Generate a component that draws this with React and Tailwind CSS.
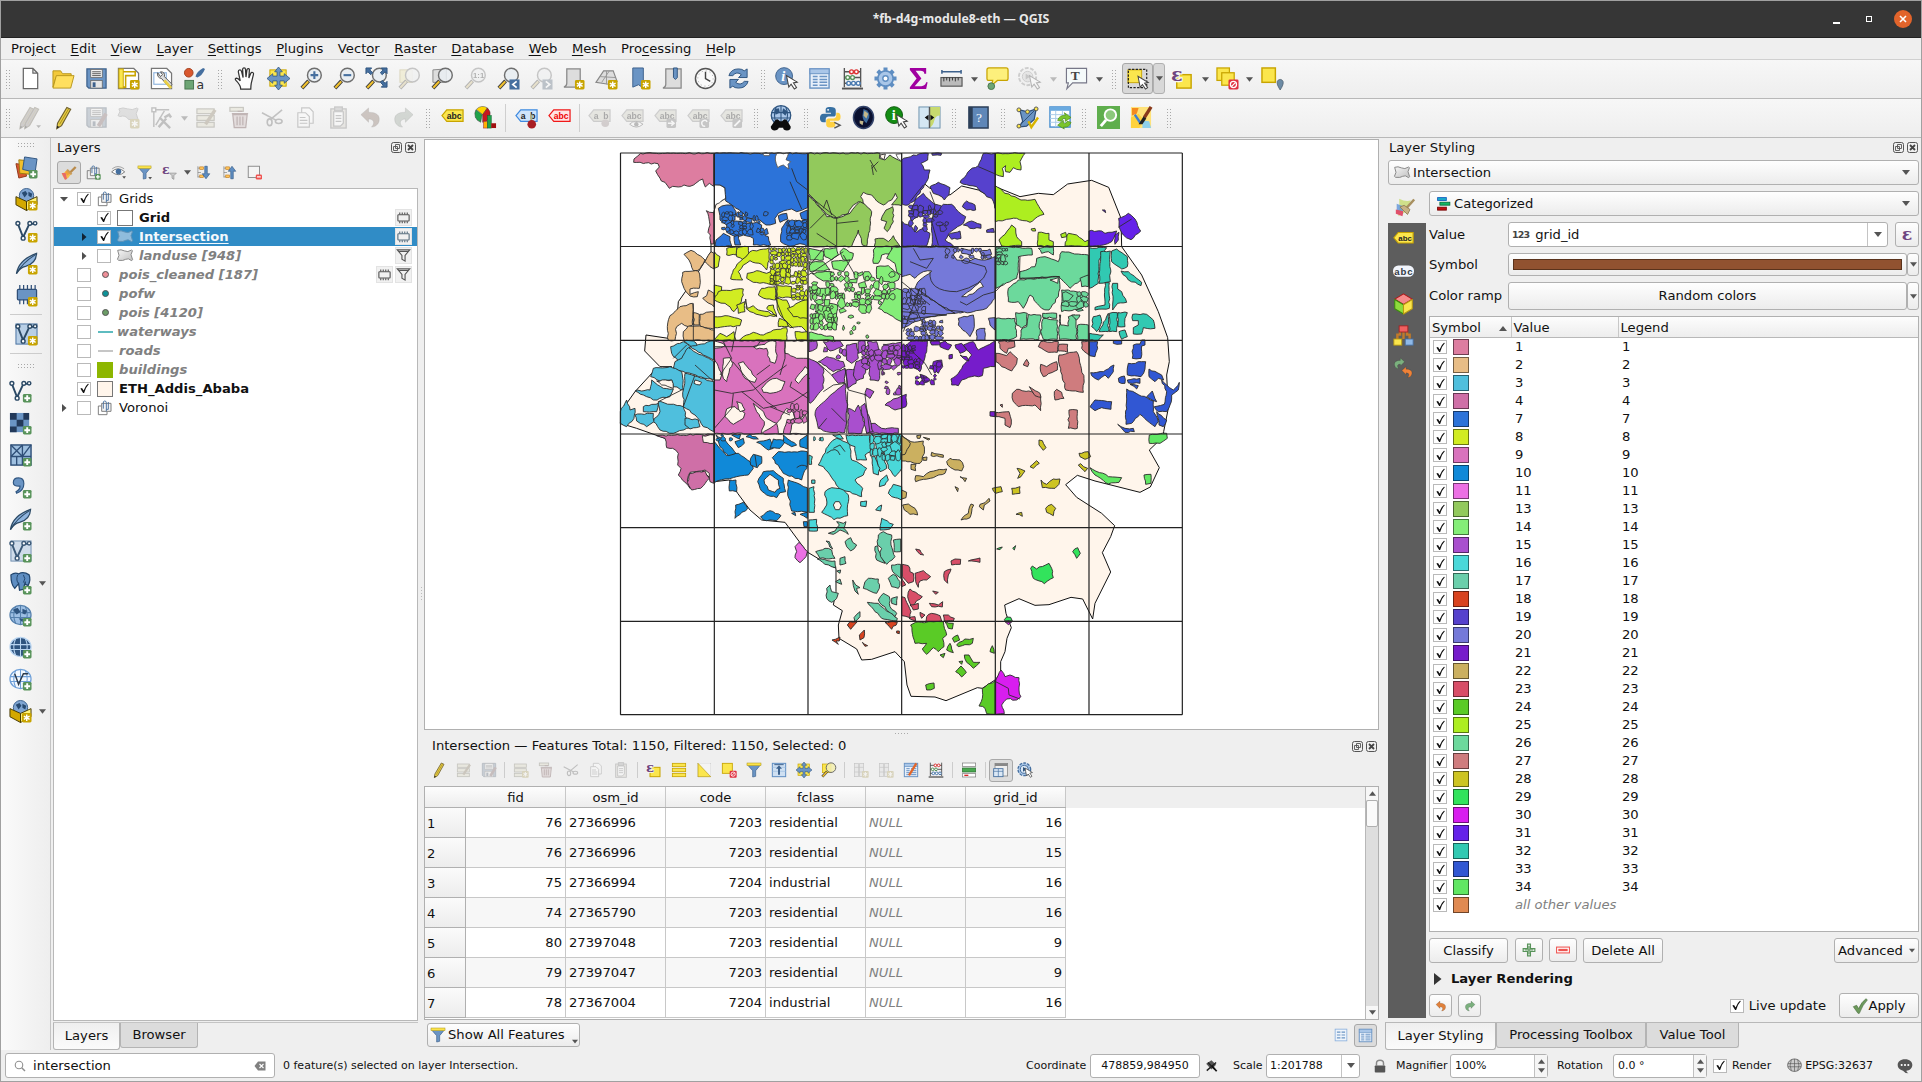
import React from 'react';
import clsx from 'clsx';

/* ---------- icons (24 x 24 grid) ---------- */

const Star = () => (
  <g>
    <rect x="13.5" y="13.5" width="10" height="10" rx="1.5" fill="#c8a400" />
    <path d="M18.5 15v7M15.5 16.8l6 3.4M15.5 20.2l6-3.4" stroke="#fff" strokeWidth="1.5" />
  </g>
);
const Plus = () => (
  <g>
    <rect x="14.5" y="14.5" width="9" height="9" rx="1.5" fill="#58935a" />
    <path d="M19 16v6M16 19h6" stroke="#fff" strokeWidth="2" />
  </g>
);
const Lens = ({ fill = '#e9eef2' }) => (
  <g>
    <path d="M9 14.5L2 22" stroke="#3c3c3c" strokeWidth="4" />
    <path d="M8.6 15L2.4 21.6" stroke="#f2c22e" strokeWidth="2.2" />
    <circle cx="15" cy="8.5" r="7.2" fill={fill} stroke="#6e6e6e" strokeWidth="1.5" />
  </g>
);
const Cursor = () => (
  <path d="M12 9l2.4 12 2.4-3 3.4 5 2.3-1.6-3.3-4.8 4-.8z" fill="#fff" stroke="#444" strokeWidth="1.1" />
);
const Tag = ({ fill, stroke, text = '#222', label = 'abc' }) => (
  <g>
    <path d="M1 10l5-6h17v12H6z" fill={fill} stroke={stroke} strokeWidth="1.3" />
    <text x="6" y="13.5" fontSize="9" fontWeight="bold" fontFamily="Liberation Sans, sans-serif" fill={text} textLength="15.5">{label}</text>
  </g>
);
const Pencil = ({ c = '#e9cf45', x = 0 }) => (
  <g transform={`translate(${x} 0)`}>
    <path d="M15.5 1.5l4 2L10 20.500l-5 3 .8-5.500z" fill={c} stroke="#6f6030" strokeWidth="1.2" />
    <path d="M5.400 20.500L5 23.500l2.600-1.600z" fill="#222" />
    <path d="M17.300 3L8 19" stroke="#a58b1e" strokeWidth="1" />
  </g>
);
const Floppy = () => (
  <g>
    <path d="M2 2h20v20H4l-2-2z" fill="#6a94c4" stroke="#3d618c" strokeWidth="1.3" />
    <rect x="6" y="2.500" width="12" height="8.500" fill="#f4f4f4" stroke="#666" strokeWidth=".8" />
    <path d="M7.500 5h9M7.500 7h9M7.500 9h9" stroke="#555" strokeWidth="1" />
    <rect x="6" y="14" width="12" height="8" fill="#e6e6e6" stroke="#666" strokeWidth=".8" />
    <rect x="8" y="16" width="3" height="5" fill="#3d618c" />
  </g>
);
const Page = () => <path d="M4.500 1.500h10l5 5v16h-15z M14.500 1.500v5h5" fill="#fff" stroke="#666" strokeWidth="1.3" />;
const Funnel = () => (
  <g>
    <path d="M2 4h20l-7.500 9v8.500l-4.500 1V13z" fill="#6a94c4" stroke="#3d618c" strokeWidth="1" />
    <rect x="1.500" y="1.500" width="21" height="4" fill="#fbe34a" stroke="#b09a20" strokeWidth=".8" />
  </g>
);
const VNodes = ({ c = '#2c4a66' }) => (
  <g fill="none" stroke={c} strokeWidth="1.500">
    <path d="M3 4l5.500 14L15 4h5" strokeWidth="2" />
    <g fill="#fff"><circle cx="3" cy="3.500" r="2" /><circle cx="8.500" cy="19" r="2" /><circle cx="15.500" cy="3.500" r="2" /><circle cx="21" cy="3.500" r="1.800" /></g>
  </g>
);
const Globe = ({ fill = '#8fb4de', land = '#274a70' }) => (
  <g>
    <ellipse cx="12" cy="11.500" rx="11" ry="10" fill={fill} stroke={land} strokeWidth="1.300" />
    <path d="M1.500 9h21M1.500 14h21M12 1.500v20M7 2.500q-4 9 0 18M17 2.500q4 9 0 18" stroke={land} strokeWidth="1.100" fill="none" />
  </g>
);
const Feather = () => (
  <g>
    <path d="M1.500 22.500Q4 8 22.500 1.500Q22 12 11 15Q5.500 16 1.500 22.500z" fill="#8fb4de" stroke="#2c4a66" strokeWidth="1.300" />
    <path d="M1.500 22.500Q8 11 21 3" stroke="#2c4a66" fill="none" strokeWidth="1.200" />
  </g>
);
const Box = () => (
  <g>
    <circle cx="12" cy="8" r="7.500" fill="#7fa5d2" stroke="#3d618c" />
    <path d="M7 5l4-2 2 3-3 4zM14 4l4 2-1 4-3-2z" fill="#274a70" />
    <path d="M1 9l11 5v9.500L1 17.500z" fill="#d3a800" stroke="#453800" strokeWidth="1" />
    <path d="M23 9l-11 5v9.500l11-6z" fill="#fff27a" stroke="#453800" strokeWidth="1" />
  </g>
);
const Abacus = () => (
  <g>
    <path d="M3.500 1v20M20.500 1v20M3 5h18M3 11h18M3 17h18" stroke="#555" strokeWidth="1.400" />
    <path d="M1 22.500h22" stroke="#555" strokeWidth="2" />
    <g fill="#fff" strokeWidth="1.500"><g stroke="#d33"><circle cx="11" cy="5" r="2" /><circle cx="16" cy="5" r="2" /></g><g stroke="#58935a"><circle cx="7" cy="11" r="2" /><circle cx="12" cy="11" r="2" /></g><g stroke="#4a7ab0"><circle cx="8" cy="17" r="2" /><circle cx="13" cy="17" r="2" /><circle cx="18" cy="17" r="2" /></g></g>
  </g>
);
const Gear = ({ c = '#5f8ec2' }) => (
  <g>
    <path d="M12 .5v23M.5 12h23M3.900 3.900l16.200 16.200M20.100 3.900L3.900 20.100" stroke={c} strokeWidth="4.200" />
    <circle cx="12" cy="12" r="8" fill="#a9c6e8" stroke={c} strokeWidth="1.800" />
    <circle cx="12" cy="12" r="2.800" fill="#fff" stroke={c} strokeWidth="1.500" />
  </g>
);
const Rows = () => (
  <g fill="#e3dba0" stroke="#7c7650" strokeWidth="1.200"><rect x="2" y="3" width="18" height="5" /><rect x="2" y="10" width="18" height="5" /><rect x="2" y="17" width="18" height="5" /></g>
);
const Trash = () => (
  <g stroke="#8a3b3b" strokeWidth="1.300" fill="#e0b0b0"><rect x="2" y="1.500" width="14" height="4" fill="#e3dba0" stroke="#7c7650" /><path d="M5 9h15l-1.500 13.500h-12z" /><path d="M4 8h17M10 5.500h5M9.500 11v9M12.500 11v9M15.500 11v9" /></g>
);
const Scissors = () => (
  <g stroke="#666" strokeWidth="1.700" fill="none"><path d="M1 7l15 8M22 4L10 14" /><ellipse cx="18.500" cy="16" rx="3.500" ry="2.200" /><ellipse cx="9" cy="17" rx="2.500" ry="3.500" /></g>
);
const Copy = () => (
  <g fill="#fff" stroke="#777" strokeWidth="1.200"><path d="M8 2h8l4 4v12H8z" /><path d="M4 7h8l4 4v11H4z" /><path d="M6 12h6M6 15h8M6 18h8" /></g>
);
const Clip = () => (
  <g stroke="#777" strokeWidth="1.300"><rect x="4" y="3" width="16" height="20" fill="#d9d0b8" /><path d="M7 6h10v12l-3 3H7z" fill="#fff" /><rect x="8" y="1" width="8" height="4" fill="#aaa" /><path d="M9 10h6M9 13h6M9 16h6" /></g>
);
const Undo = ({ c = '#e0813c' }) => <path d="M2 9l8-7v4.500c8 0 12 3 11 9-.5 3.500-4 6.500-8 6.500 3-3 4-8-3-8.500V17z" fill={c} stroke="#00000044" />;
const Epsilon = ({ x = 0, y = 14, s = 18 }) => <text x={x} y={y} fontSize={s} fontWeight="bold" fontFamily="DejaVu Serif, Liberation Serif, serif" fill="#6f4580">ε</text>;
const Group = () => (
  <g fill="none" stroke="#777" strokeWidth="1.400"><path d="M6 9H2v13h13v-4" /><path d="M7 5h14v12H7z" fill="#f3f3f3" /><path d="M14 17V4q0-2.500-2.500-2.500T9.500 5v8M14 14h3V3" stroke="#456f9f" /></g>
);
const Arrows4 = () => (
  <g><rect x="3" y="3" width="17" height="17" fill="#fbe64d" stroke="#c8a400" /><path d="M12 0l4 5h-2.500v4.500H18V7l6 5-6 5v-2.500h-4.500V19H16l-4 5-4-5h2.500v-4.500H6V17l-6-5 6-5v2.500h4.500V5H8z" fill="#6a94c4" stroke="#2f5580" strokeWidth=".8" /></g>
);
const NoEntry = () => (
  <g><rect x="13" y="13" width="10.500" height="10.500" rx="1.500" fill="#e03040" stroke="none" /><circle cx="18.200" cy="18.200" r="3.200" fill="none" stroke="#fff" strokeWidth="1.300" /><path d="M16 20.500l4.500-4.500" stroke="#fff" strokeWidth="1.300" /></g>
);
const Table = ({ head = '#6a94c4' }) => (
  <g><rect x="2" y="2" width="20" height="20" fill="#e8f0fa" stroke={head} strokeWidth="1.500" /><rect x="2" y="2" width="20" height="5" fill="#a9c6e8" stroke={head} /><path d="M5 10h5M12 10h8M5 13h5M12 13h8M5 16h5M12 16h8M5 19h5M12 19h8" stroke={head} strokeWidth="1.500" /></g>
);
const Poly = ({ fill = 'url(#polyGrad)', stroke = '#8a8a8a' }) => <path d="M1 3.500q5-2 10 .8t11-1.300l1.200 1-2.200 6 2.400 7.500-1.400 1.500q-5.500-4.500-9-2t-10.500 1.500l-1.800-1.500 2.300-6z" fill={fill} stroke={stroke} strokeWidth="1.500" />;
const Chip = ({ c = '#555' }) => (
  <g stroke={c} strokeWidth="1.800" fill="none"><rect x="3" y="7.500" width="18" height="10" rx="1" /><path d="M6 4v3M10 4v3M14 4v3M18 4v3M6 18v3M10 18v3M14 18v3M18 18v3" /></g>
);

const ICONS = {
  page: <Page />,
  folder: <g><path d="M1 4h8l2 3h9v4H4L1 21z" fill="#f3c93a" stroke="#b8961c" /><path d="M4.500 9H23l-3.500 13H1z" fill="#ffdf5e" stroke="#b8961c" /></g>,
  save: <Floppy />,
  layoutNew: <g><path d="M1.500 1.500h16l5 5v16h-21z" fill="#fff" stroke="#777" strokeWidth="1.300" /><path d="M5 21V5h14v4H9v12z" fill="#fff" stroke="#c8a400" strokeWidth="1.600" /><rect x="2" y="2" width="4.500" height="20" fill="#fbe64d" stroke="#c8a400" /><Star /></g>,
  layoutMgr: <g><path d="M1.500 1.500h16l5 5v16h-21z" fill="#fff" stroke="#777" strokeWidth="1.300" /><rect x="4" y="6" width="13" height="12" fill="#fff" stroke="#8fb4de" strokeWidth="1.200" /><path d="M8 6q-1 5 4 6l8 9 3-3-8-8q1-5-4-5l2 3-2 2z" fill="#ddd" stroke="#555" /><path d="M15 14l7 8" stroke="#e9cf45" strokeWidth="3" /></g>,
  style: <g><circle cx="6" cy="6" r="4.500" fill="#d9572e" stroke="#a33f1c" /><path d="M13 10q1-5 8-9l2 1q-3 7-8 9z" fill="#456f9f" /><rect x="2" y="14" width="9" height="9" fill="#6da574" stroke="#48754e" /><text x="14" y="22.500" fontSize="13" fontFamily="DejaVu Sans, sans-serif" fill="#333">a</text></g>,
  hand: <path d="M7 23q0-4-5-9-1.500-2 .5-2.500 2 0 4 3L4.500 5q0-2 1.500-2t2 2l1.500 6L9 2.500Q9 1 10.500 1T12 2.500l.5 8 1-7.500q.3-1.500 1.600-1.300T16 3.500l-.5 8 2-5q.7-1.300 2-.8t.8 2L18 17q-.5 3-.5 6z" fill="#fff" stroke="#333" strokeWidth="1.300" />,
  pan: <Arrows4 />,
  zoomIn: <g><Lens /><path d="M15 4.500v8M11 8.500h8" stroke="#456f9f" strokeWidth="2.200" /></g>,
  zoomOut: <g><Lens /><path d="M11 8.500h8" stroke="#456f9f" strokeWidth="2.200" /></g>,
  zoomFull: <g><Lens /><path d="M1 1h6L5 3l3 3-2 2-3-3-2 2zM23 1h-6l2 2-3 3 2 2 3-3 2 2zM23 21h-6l2-2-3-3 2-2 3 3 2-2z" fill="#456f9f" stroke="#2f5580" /></g>,
  zoomSel: <g><rect x="2" y="3" width="13" height="13" fill="#fbe64d" stroke="#c8a400" /><Lens fill="#e9eef2dd" /></g>,
  zoomLayer: <g><path d="M2 3l14-1v14H2z" fill="#ddd" stroke="#888" /><Lens fill="#e9eef2dd" /></g>,
  zoomOne: <g><Lens /><text x="9.500" y="12" fontSize="8" fontWeight="bold" fontFamily="Liberation Sans" fill="#333">1:1</text></g>,
  zoomLast: <g><Lens /><rect x="13" y="13" width="10.500" height="10.500" fill="#456f9f" /><path d="M20.500 15l-4 3.200 4 3.300" stroke="#fff" strokeWidth="1.800" fill="none" /></g>,
  zoomNext: <g><Lens /><rect x="13" y="13" width="10.500" height="10.500" fill="#456f9f" /><path d="M16.500 15l4 3.200-4 3.300" stroke="#fff" strokeWidth="1.800" fill="none" /></g>,
  mapNew: <g><path d="M5 2h14v19H2q3-1 3-4z" fill="#ddd" stroke="#888" strokeWidth="1.300" /><Star /></g>,
  map3d: <g><path d="M1 16L9 4h10l4 11-9 3z" fill="#ddd" stroke="#888" strokeWidth="1.200" /><path d="M5 10l16 1M12 4v14M7 16l8-12" stroke="#999" /><Star /></g>,
  bookNew: <g><path d="M5 1h11v21l-5-3.500L5 21z" fill="#6a94c4" stroke="#3d618c" /><Star /></g>,
  bookmark: <g><path d="M5 2h16v20H2q3-1 3-4z" fill="#ddd" stroke="#888" strokeWidth="1.300" /><path d="M13 1h4v10l-2 2-2-2z" fill="#6a94c4" stroke="#2f5580" /></g>,
  clock: <g><circle cx="12" cy="12" r="10.500" fill="#fafafa" stroke="#555" strokeWidth="1.500" /><path d="M12 5v7l5 3" stroke="#444" strokeWidth="1.500" fill="none" /><circle cx="12" cy="12" r="8" fill="none" stroke="#999" strokeDasharray="1 3.190" /></g>,
  refresh: <g><path d="M2 9q2-7 10-7 4 0 6 2l3-2v9h-9l3-3q-5-4-9 1z" fill="#6a94c4" stroke="#2f5580" /><path d="M22 15q-2 7-10 7-4 0-6-2l-3 2v-9h9l-3 3q5 4 9-1z" fill="#6a94c4" stroke="#2f5580" /></g>,
  identify: <g><circle cx="9.500" cy="9.500" r="8.800" fill="#6a94c4" stroke="#3d618c" /><text x="6.500" y="15" fontSize="15" fontStyle="italic" fontWeight="bold" fontFamily="Liberation Serif" fill="#fff">i</text><Cursor /></g>,
  table: <Table />, abacus: <Abacus />, gear: <Gear />,
  sigma: <path d="M3 1h17v6h-2q0-3-4-3H9l6 8-7 8h7q4 0 5-4h1.500L20 23H3v-2l7-9-7-9z" fill="#a000a0" />,
  ruler: <g><path d="M2 5h20M2 3v4M22 3v4" stroke="#3d618c" strokeWidth="1.600" /><rect x="1" y="11" width="22" height="9" fill="#bbb" stroke="#555" strokeWidth="1.200" /><path d="M4 11v4M7 11v3M10 11v4M13 11v3M16 11v4M19 11v3" stroke="#333" /></g>,
  maptip: <g><path d="M3 1h18q2 0 2 2v9q0 2-2 2h-9l-6 5 1-5H3q-2 0-2-2V3q0-2 2-2z" fill="#fdf07c" stroke="#c8a400" strokeWidth="1.300" /><circle cx="5.500" cy="20" r="3.500" fill="#6da574" stroke="#48754e" /></g>,
  gearCursor: <g><circle cx="10" cy="10" r="9" fill="#eee" stroke="#888" strokeWidth="2" strokeDasharray="4 1.600" /><circle cx="10" cy="10" r="5.500" fill="#ccc" stroke="#888" /><path d="M8 7l5 3-5 3z" fill="#777" /><Cursor /></g>,
  textAnn: <g><path d="M1.500 1.500h21v15H8l-6 6 1.500-6h-2z" fill="#f5fafa" stroke="#778" strokeWidth="1.200" /><text x="6" y="14" fontSize="14" fontWeight="bold" fontFamily="Liberation Serif" fill="#444">T</text></g>,
  select: <g><rect x="1" y="2" width="15" height="14" fill="#fbe64d" stroke="#c8a400" /><rect x="1.500" y="1.500" width="20" height="20" fill="none" stroke="#222" strokeWidth="1.300" strokeDasharray="2.500 1.500" /><Cursor /></g>,
  selExpr: <g><rect x="6" y="8" width="15" height="14" fill="#fbe64d" stroke="#c8a400" strokeWidth="1.500" /><text x="0" y="15" fontSize="20" fontWeight="bold" fontFamily="DejaVu Serif, Liberation Serif, serif" fill="#6f4580" stroke="#f6f6f6" strokeWidth="2.500" paintOrder="stroke">ε</text></g>,
  deselect: <g fill="#fbe64d" stroke="#c8a400" strokeWidth="1.300"><rect x="1" y="1" width="13" height="13" /><rect x="6" y="6" width="13" height="13" /><NoEntry /></g>,
  deselectOne: <g><rect x="2" y="2" width="15" height="15" fill="#fbe64d" stroke="#c8a400" strokeWidth="1.300" /><NoEntry /></g>,
  selLoc: <g><rect x="1" y="1" width="14" height="15" fill="#fbe64d" stroke="#c8a400" strokeWidth="1.500" /><path d="M20 24q-4-6-3-9a3.200 3.200 0 0 1 6 0q1 3-3 9z" fill="#6d8ba5" stroke="#456" strokeWidth=".7" /></g>,
  pencils: <g><Pencil c="#9b8a8a" x={-4} /><Pencil c="#9b8a8a" x={1} /><path d="M18 20h5l-2.500 3z" fill="#555" /></g>,
  pencil: <Pencil />,
  saveEdit: <g><Floppy /><path d="M22 8l-8 13" stroke="#9c5a5a" strokeWidth="4" /></g>,
  addPoly: <g><path d="M2 3q4-2 9 0t10-1l1 1-2 5 2 6H12q-3-5-9-3l-2-1 2-4z" fill="#b9b9b9" stroke="#888" /><Star /></g>,
  vertex: <g stroke="#666" strokeWidth="1.500"><path d="M4 22V4h16" fill="none" /><path d="M6 20L15 5" /><rect x="2" y="2" width="4" height="4" fill="#fff" /><path d="M9 22l8-9M10 12l11 11M15 12l5-3 2 3" strokeWidth="2.500" fill="none" /></g>,
  rowsEdit: <g><Rows /><path d="M21 4L11 19" stroke="#9c7a3a" strokeWidth="3.500" /></g>,
  trash: <Trash />, cut: <Scissors />, copy: <Copy />, paste: <Clip />,
  undo: <Undo c="#a06a4a" />, redo: <g transform="translate(24 0) scale(-1 1)"><Undo c="#8aa88a" /></g>,
  undoC: <Undo />, redoC: <g transform="translate(24 0) scale(-1 1)"><Undo c="#7bb07e" /></g>,
  tag: <Tag fill="#fbe64d" stroke="#c8a400" />,
  diagram: <g><path d="M9 9L2.500 3.500A8.500 8.500 0 0 1 14 2z" fill="#ffd500" stroke="#444" strokeWidth=".5" /><path d="M8.500 9L2 4a9 9 0 0 0 5 13z" fill="#1fa24a" stroke="#333" strokeWidth=".5" /><path d="M9 9l5-7a8.600 8.600 0 0 1-5 15z" fill="#c8171e" stroke="#333" strokeWidth=".5" /><rect x="10" y="16" width="4" height="7" fill="#ffb000" stroke="#a33" strokeWidth=".6" /><rect x="14" y="10" width="4" height="13" fill="#1fa24a" stroke="#163" strokeWidth=".6" /><rect x="18" y="18" width="5" height="5" fill="#a01010" /></g>,
  tagPin: <g><Tag fill="#cfe4fb" stroke="#3f8ae0" label="ab" /><path d="M17 9v7" stroke="#aa8" strokeWidth="2" /><circle cx="17.500" cy="19" r="4.500" fill="#a81e24" /></g>,
  tagRed: <Tag fill="#ffe3e3" stroke="#f01818" text="#e00" />,
  tagPinG: <g><Tag fill="#cfcda8" stroke="#888" label="ab" /><circle cx="18" cy="18" r="4" fill="#a88" /></g>,
  tagEye: <g><Tag fill="#cfcda8" stroke="#888" /><path d="M9 19q6-6 14 0-7 6-14 0z" fill="#fff" stroke="#555" /><circle cx="16" cy="19" r="2.300" fill="#555" /></g>,
  tagMove: <g><Tag fill="#cfcda8" stroke="#888" /><rect x="13" y="13" width="10" height="10" rx="2" fill="#777" /><path d="M14.500 18h6M18 15.500l3 2.500-3 2.500" stroke="#fff" fill="none" strokeWidth="1.500" /></g>,
  tagRot: <g><Tag fill="#cfcda8" stroke="#888" /><rect x="13" y="13" width="10" height="10" rx="2" fill="#777" /><path d="M21 16.500a3 3 0 1 0-2 4.500" stroke="#fff" fill="none" strokeWidth="1.500" /></g>,
  tagEdit: <g><Tag fill="#cfcda8" stroke="#888" /><rect x="13" y="13" width="10" height="10" rx="2" fill="#777" /><path d="M15 21l6-6" stroke="#fff" strokeWidth="2" /></g>,
  metasearch: <g><circle cx="12" cy="9.500" r="9" fill="#a9c6e8" stroke="#2f5580" strokeWidth="1.200" /><path d="M3 7h18M3 12h18M12 1v18M7.500 2q-3 7 0 15M16.500 2q3 7 0 15" stroke="#2f5580" fill="none" /><path d="M6 4l4-1 1 4-4 2zM14 3l4 3-2 4-3-3z" fill="#2f5580" /><path d="M6 15q2-3 4-1l1 1h2l1-1q2-2 4 1l3 5q0 3.500-3.500 3.500T14 21h-4q-1 2.500-4 2.500T2.500 20z" fill="#0c0c0c" /></g>,
  python: <g><path d="M12 1c-5 0-5 1.500-5 3.500V7h5.500v1H5c-3 0-4 2-4 4.500S2 17 4.500 17H7v-3c0-2 1.500-3 3-3h5c1.500 0 2.500-1 2.500-2.500v-4C17.500 2 15.500 1 12 1z" fill="#3871a3" /><path d="M12 22.500c5 0 5-1.500 5-3.500v-2.500h-5.500v-1H19c3 0 3.500-2 3.500-4.500S21.500 7 19.500 7H18v3c0 2-1.500 3-3 3h-5c-1.500 0-2.500 1-2.500 2.500v4c0 2 2 3 4.500 3z" fill="#ffd040" /><circle cx="9.500" cy="4" r="1" fill="#fff" /><path d="M16 17l6 3-6 3" stroke="#555" fill="none" strokeWidth="1.500" /></g>,
  earth: <g><ellipse cx="12" cy="12" rx="10.500" ry="11.500" fill="#0a1030" stroke="#33436a" strokeWidth="1.500" /><path d="M12 3q7 2 6 9l-3 6q-4-3-4-8z" fill="#3f6ea0" /><path d="M13 5l4 3-2 5-3-3zM8 15l4 1-1 4-3-2z" fill="#c4b78a" /></g>,
  infoGreen: <g><circle cx="9.500" cy="9.500" r="8.800" fill="#138c13" stroke="#0a5a0a" /><text x="7" y="15" fontSize="15" fontWeight="bold" fontFamily="Liberation Serif" fill="#fff">i</text><Cursor /></g>,
  swipe: <g><rect x="1" y="1" width="22" height="22" fill="#d4e7f3" stroke="#6d93ad" /><path d="M12 1h11v9q-5 0-6 5t-5 8z" fill="#c7da6e" /><path d="M12 1v22" stroke="#555" strokeWidth="1.500" /><path d="M11 9v6l-4-3zM13 9v6l4-3z" fill="#111" /></g>,
  help: <g><path d="M2 1h20v22H2z" fill="#5f87b8" stroke="#2c3f58" strokeWidth="1.500" /><path d="M2 1h4v22H2z" fill="#2c3f58" /><text x="9.500" y="17" fontSize="14" fontFamily="Liberation Serif" fill="#fff">?</text></g>,
  checkGeom: <g><path d="M4 4l8 2 9-3-2 11-8 7-8 1 4-6z" fill="#6a94c4" stroke="#2f4f78" strokeWidth="1.300" /><path d="M3 21L21 3" stroke="#2f4f78" /><g fill="#fbe64d" stroke="#555"><circle cx="3" cy="4" r="2" /><circle cx="12" cy="6" r="2" /><circle cx="21" cy="3" r="2" /><circle cx="3" cy="21" r="2" /></g><path d="M13 16l3 6L23 12" stroke="#d8b400" strokeWidth="2.500" fill="none" /></g>,
  tableRef: <g><rect x="1" y="1" width="21" height="21" fill="#fff" stroke="#4a90d0" strokeWidth="1.500" /><rect x="1" y="1" width="21" height="4" fill="#6aaae0" /><path d="M1 9h21M1 13h21M1 17h21M7 5v17M14 5v17" stroke="#a8cbe8" /><path d="M9 15q2-6 8-5l-1-3 7 5-6 4v-3q-3-1-4 3zM23 17q-2 6-8 5l1 2-7-4 6-5v3q3 1 4-2z" fill="#7ac52c" stroke="#4b8a14" strokeWidth=".7" /></g>,
  greenLens: <g><rect width="24" height="24" fill="#5fae4d" /><circle cx="14" cy="9.500" r="6" fill="#8cc97c" stroke="#fff" strokeWidth="2" /><path d="M9.500 14.500L4 21" stroke="#fff" strokeWidth="3" /></g>,
  brushMap: <g><rect x="1" y="1" width="21" height="22" fill="#ffe27a" /><path d="M1 12l8-4 5 6-4 9H1z" fill="#ffd23c" /><path d="M2 2h7l-2 6-5 2z" fill="#f58b1f" /><path d="M13 15l7 1 2 7h-9z" fill="#8fd0ea" /><path d="M5 9l6 9" stroke="#3f7fd0" strokeWidth="2.500" /><path d="M15 12l7-11" stroke="#8a3a1c" strokeWidth="3.500" /><path d="M9 19l5-8 3 2-4 6z" fill="#222" /></g>,
  dsm: <g><path d="M1 8l9 1 2 12-8 2z" fill="#d9572e" stroke="#8e3a1c" /><path d="M4 4l11 1v14l-10-1z" fill="#f3c02a" stroke="#9c7a12" /><path d="M10 1l13 2-2 14-13-3z" fill="#6a94c4" stroke="#2f5580" /><Plus /></g>,
  gpkg: <g><Box /><Star /></g>,
  shpNew: <g><VNodes /><Star /></g>,
  spatNew: <g><Feather /><Star /></g>,
  memNew: <g><path d="M5 1v20M9 1v20M13 1v20M17 1v20M21 1v20" stroke="#2f4f78" strokeWidth="1.300" /><rect x="2.500" y="5.500" width="20" height="11" rx="1" fill="#6a94c4" stroke="#2f4f78" strokeWidth="1.300" /><Star /></g>,
  virtNew: <g><rect x="1" y="1" width="22" height="21" fill="#b8cfe6" stroke="#456f9f" /><VNodes /><Star /></g>,
  vecAdd: <g><VNodes /><Plus /></g>,
  rasAdd: <g><rect x="1" y="1" width="20" height="20" fill="#6a94c4" /><path d="M1 1h7v7H1zM15 1h6v7h-6zM8 8h7v7H8zM1 15h7v6H1z" fill="#22395a" /><Plus /></g>,
  meshAdd: <g><rect x="2" y="1" width="21" height="21" fill="#9fc0e0" stroke="#2f4f78" strokeWidth="1.500" /><path d="M2 13h21M14 1v12M2 1l12 12M14 1L2 13M23 1l-9 12M8 13v9M14 13v9" stroke="#2f4f78" strokeWidth="1.400" /><Plus /></g>,
  csvAdd: <g><path d="M4.500 7q0-5 5.500-5t5.500 6q0 7-7.500 10l-.7-1.500q4.500-2.500 4.200-6-7 .5-7-3.500z" fill="#6a94c4" stroke="#2f5580" strokeWidth="1.200" /><Plus /></g>,
  spatAdd: <g><Feather /><Plus /></g>,
  virtAdd: <g><rect x="2" y="1" width="21" height="21" fill="#cfdcea" stroke="#6f8fb0" /><VNodes c="#3c5a78" /><Plus /></g>,
  pgAdd: <g><path d="M2 3q4-3 8-1 5-3 11 1 2 5-1 11l-3-1v-3l-2 8-4 1-1-7-4 5q-4-4-4-14z" fill="#5f8ec2" stroke="#22466e" strokeWidth="1.300" /><path d="M9 3q-2 6 1 9M15 3q3 4 0 8" stroke="#22466e" fill="none" /><Plus /></g>,
  wmsAdd: <g><Globe fill="#9dbfe4" land="#5580ad" /><path d="M4 6l5-2 3 4-4 3zM14 5l5 2-2 4-3-1zM10 15l5 0-1 4z" fill="#2f5580" /><Plus /></g>,
  xyzAdd: <g><Globe fill="#2f5580" land="#b8d4f0" /><Plus /></g>,
  wfsAdd: <g><Globe fill="#f4f9ff" land="#6fa0d8" /><path d="M6 6l4 11 5-11h5" stroke="#2c3a4a" fill="none" strokeWidth="1.500" /><Plus /></g>,
  brush: <g><path d="M1 12q5 0 8-5l6 7q-3 6-9 8-4-5-5-10z" fill="#f6c04a" /><path d="M1 12l6 0 2 9-3 1z" fill="#e86a6a" /><path d="M6 10l5-3 4 5-6 4z" fill="#f0a03a" /><path d="M13 12l9-9" stroke="#b98a4a" strokeWidth="3.500" /><path d="M9 7l7 7" stroke="#c89a5a" strokeWidth="3" /></g>,
  groupAdd: <g><Group /><Plus /></g>,
  eye: <g><path d="M1 11q10-10 21 0-10 9-21 0z" fill="#fff" stroke="#777" strokeWidth="1.500" /><circle cx="12" cy="10.500" r="4.500" fill="#456f9f" /><path d="M2 6q9-7 19 0" stroke="#777" fill="none" /><path d="M18 18h6l-3 4z" fill="#555" /></g>,
  funnelDd: <g><Funnel /><path d="M18 19h6l-3 4z" fill="#555" /></g>,
  funnel: <Funnel />,
  exprF: <g><Epsilon x={0} y={15} s={20} /><path d="M12 13h11l-4 4v6l-3-2v-4z" fill="#ccc" stroke="#888" /></g>,
  expand: <g><path d="M3 2v18M3 5h5M3 12h5M3 19h5" stroke="#777" fill="none" /><rect x="6" y="3" width="6" height="4" fill="#ffc45a" stroke="#c07a1a" /><rect x="6" y="16" width="6" height="4" fill="#ffc45a" stroke="#c07a1a" /><path d="M14 2h4v12h4l-6 8-6-8h4z" fill="#5f8ec2" stroke="#2f5580" /></g>,
  collapse: <g><path d="M3 2v18M3 5h5M3 12h5M3 19h5" stroke="#777" fill="none" /><rect x="6" y="3" width="6" height="4" fill="#ffc45a" stroke="#c07a1a" /><rect x="6" y="16" width="6" height="4" fill="#ffc45a" stroke="#c07a1a" /><path d="M14 22h4V10h4l-6-8-6 8h4z" fill="#5f8ec2" stroke="#2f5580" /></g>,
  removeL: <g><rect x="2" y="2" width="18" height="18" fill="#f4f4f4" stroke="#888" strokeWidth="1.500" /><rect x="14" y="15" width="10" height="8" rx="2" fill="#ef5350" /><path d="M16 19h6" stroke="#fff" strokeWidth="2" /></g>,
  group: <Group />, poly: <Poly />, polySel: <Poly fill="#8fbcdc" stroke="#5f93b8" />, chip: <Chip />, chipW: <Chip c="#5a7080" />,
  funnelG: <path d="M2 3h20l-7.500 9v9l-5-3v-6z M5 5.500h14" fill="none" stroke="#555" strokeWidth="1.800" />,
  addRow: <g><Rows /><Star /></g>,
  selAll: <g fill="#fbe64d" stroke="#c8a400" strokeWidth="1.200"><rect x="2" y="2" width="20" height="5" /><rect x="2" y="9.500" width="20" height="5" /><rect x="2" y="17" width="20" height="5" /></g>,
  invert: <g><rect x="2" y="2" width="20" height="20" fill="#f4f4f4" stroke="#aaa" /><path d="M2 2v20h20z" fill="#f4f4f4" /><path d="M2 2h20v20z" fill="#f4f4f4" /><path d="M3 2l19 20H3z" fill="#fbe64d" stroke="#b89a10" /></g>,
  moveTop: <g><rect x="2" y="2" width="20" height="20" fill="#cfe0f2" stroke="#5f8ec2" strokeWidth="1.500" /><path d="M2 8h20M2 14h20" stroke="#9dbde0" /><path d="M5 4h14" stroke="#3d618c" strokeWidth="1.500" /><path d="M12 5l4.500 5h-3v9h-3v-9h-3z" fill="#3d618c" /></g>,
  zoomY: <g><rect x="2" y="3" width="13" height="13" fill="#fbe64d" stroke="#c8a400" /><Lens fill="#f3efb0dd" /></g>,
  colNew: <g><g fill="#ddd" stroke="#777"><rect x="2" y="2" width="6" height="20" /><rect x="10" y="2" width="6" height="20" /></g><path d="M2 8h14M2 15h14" stroke="#777" /><Star /></g>,
  colEdit: <g><Table /><path d="M20 2L9 20" stroke="#e2662a" strokeWidth="3.500" /></g>,
  cond: <g stroke="#777"><rect x="2" y="1.500" width="20" height="5" fill="#fff" /><rect x="2" y="9" width="20" height="6" fill="#49a84f" stroke="#2c6e31" /><rect x="2" y="17.500" width="20" height="5" fill="#fff" /><path d="M5 20h6" stroke="#d22" strokeWidth="2" /></g>,
  dock: <g><rect x="3" y="2" width="19" height="19" fill="#eee" stroke="#777" /><rect x="3" y="2" width="19" height="4" fill="#888" /><rect x="1" y="10" width="14" height="12" fill="#dbe8f5" stroke="#456f9f" strokeWidth="1.300" /><path d="M1 14h14M8 10v12" stroke="#456f9f" /></g>,
  gearPlay: <g><circle cx="11" cy="11" r="9.500" fill="#a9c6e8" stroke="#456f9f" strokeWidth="2" strokeDasharray="4.200 1.800" /><circle cx="11" cy="11" r="6" fill="#dbe8f5" stroke="#456f9f" strokeWidth="1.500" /><path d="M9 7.500l6 3.500-6 3.500z" fill="#2f5580" /><Cursor /></g>,
  form: <g><rect x="2" y="2" width="20" height="20" fill="#eef4fb" stroke="#8fb4de" strokeWidth="1.500" /><path d="M5 7h6M5 12h6M5 17h6M13 7h6M13 12h6M13 17h6" stroke="#6a94c4" strokeWidth="2" /></g>,
  categ: <g strokeWidth="1.500"><rect x="1" y="1" width="15" height="5" fill="#1aa7c8" stroke="#1560c0" /><rect x="5" y="9" width="17" height="5" fill="#12b866" stroke="#0b6e3a" /><rect x="1" y="17.500" width="15" height="5" fill="#c01010" stroke="#700" /></g>,
  maskAbc: <g><rect x="0" y="5" width="24" height="13" rx="6" fill="#f1f4fb" /><text x="1.500" y="15.500" fontSize="11" fontWeight="bold" fontFamily="Liberation Sans, sans-serif" fill="#333b45" textLength="21">abc</text></g>,
  cube: <g strokeLinejoin="round" strokeWidth="1.200"><path d="M12 1l10 6-10 6L2 7z" fill="#f58a8a" stroke="#b01818" /><path d="M2 7.500l10 6V24L2 18z" fill="#8edc3c" stroke="#3c8a10" /><path d="M22 7.500l-10 6V24l10-6z" fill="#fbe64d" stroke="#b89a10" /></g>,
  tree: <g><path d="M5 16v-5h3V7M12 8v8M19 16v-5h-3V7" stroke="#c07a2a" strokeWidth="2.800" fill="none" /><rect x="7" y="1" width="10" height="7" fill="#f06060" stroke="#a02020" /><rect x="1" y="16" width="9" height="7" fill="#fbe64d" stroke="#b89a10" /><rect x="14" y="16" width="9" height="7" fill="#8fb9e8" stroke="#456f9f" /></g>,
  history: <g><g transform="scale(.6)"><g transform="translate(24 0) scale(-1 1)"><Undo c="#7bb07e" /></g></g><g transform="translate(9 10) scale(.6)"><Undo c="#ef8238" /></g></g>,
  brushBig: <g><path d="M5 2q8 4 14 2l-6 14-9 5q2-10 1-21z" fill="#cfe08a" /><path d="M2 8l8 3-1 10-7-3z" fill="#5f94d8" opacity=".8" /><path d="M1 15l9 2-1 6-8-3z" fill="#e0506a" /><path d="M14 13l9-10" stroke="#a89060" strokeWidth="3" /><path d="M6 12l9 9 3-6-7-5z" fill="#c8b284" stroke="#8d7a50" /></g>,
  addG: <path d="M9.500 2h5v7.500H22v5h-7.500V22h-5v-7.500H2v-5h7.500z M12 4.500v15M4.500 12h15" fill="#fff" stroke="#58935a" strokeWidth="2" />,
  minR: <g><rect x="1" y="7" width="22" height="10" fill="#fff" stroke="#ef5350" strokeWidth="1.800" /><path d="M4 12h16" stroke="#ef5350" strokeWidth="4" /></g>,
  apply: <path d="M2 13l5-2 3 5Q14 6 21 1l2 2Q16 10 11 23H9z" fill="#6c9a5b" stroke="#4c6e40" />,
  eps: <Epsilon x={4} y={20} s={26} />,
  lock: <g><path d="M6 11V7q0-5 6-5t6 5v4" fill="none" stroke="#888" strokeWidth="2.500" /><rect x="3" y="11" width="18" height="12" rx="1.500" fill="#555" /></g>,
  globeG: <Globe fill="#ccc" land="#5c5c5c" />,
  chat: <g><path d="M12 2c7 0 11 4 11 8.500S19 19 14 19q0 2 3 4-5 0-8-4-8-2-8-8.500C1 6 5 2 12 2z" fill="#555" /><circle cx="7" cy="10.500" r="1.600" fill="#fff" /><circle cx="12" cy="10.500" r="1.600" fill="#fff" /><circle cx="17" cy="10.500" r="1.600" fill="#fff" /></g>,
  extents: <g><path d="M2 8l9-6 8 8-8 8z" fill="#555" /><path d="M5 6l12 12M3 20l16-14" stroke="#222" strokeWidth="2.500" /><path d="M12 12l8 9" stroke="#111" strokeWidth="3" /></g>,
  search: <g fill="none" stroke="#909090" strokeWidth="2.200"><circle cx="10" cy="10" r="7.500" /><path d="M15.500 15.500L22 22" strokeWidth="3" /></g>,
  clear: <g><path d="M1 12l7-9h15v18H8z" fill="#808080" /><path d="M11 8l8 8M19 8l-8 8" stroke="#fff" strokeWidth="2.200" /></g>,
};

const Icon = ({ n, className = 'size-6', dim }) => (
  <svg viewBox="0 0 24 24" className={clsx('shrink-0 overflow-visible', className, dim && 'opacity-35 grayscale-[.6]')}>{ICONS[n]}</svg>
);
const Caret = ({ dim, className }) => (
  <svg viewBox="0 0 8 5" className={clsx('h-[5px] w-2 shrink-0', dim && 'opacity-35', className)}><path d="M0 0h8L4 5z" fill="#555" /></svg>
);
const Handle = ({ w = 'w-4' }) => (
  <div className={clsx('flex shrink-0 items-center justify-center', w)}>
    <div className="h-[21px] w-[6px] bg-[radial-gradient(#a8a8a8_0.9px,transparent_1px)] bg-[length:3px_3px]" />
  </div>
);

/* One horizontal toolbar, described as [kind, name/width, dimmed] entries */
const T = ({ items }) => items.map((it, i) => {
  const [k, a, b] = it;
  if (k === 'h') return <Handle key={i} w={a} />;
  if (k === 's') return <div key={i} className={clsx('flex shrink-0 items-center justify-center', a)}><div className="h-7 w-px bg-[#cfcfcf]" /></div>;
  if (k === 'a') return <div key={i} className={clsx('flex shrink-0 items-center justify-center', a)}><Caret dim={b} className="w-[7px]" /></div>;
  return <div key={i} className="flex w-[32.850px] shrink-0 items-center justify-center pb-px"><Icon n={a} dim={b} className={k === 'b' ? 'size-[26px]' : 'size-[23px]'} /></div>;
});

const ROW1 = [
  ['h', 'w-[13px]'], ['i', 'page'], ['i', 'folder'], ['i', 'save'], ['i', 'layoutNew'], ['i', 'layoutMgr'], ['i', 'style'],
  ['h', 'w-[18px]'], ['i', 'hand'], ['i', 'pan'], ['i', 'zoomIn'], ['i', 'zoomOut'], ['i', 'zoomFull'], ['i', 'zoomSel', 1], ['i', 'zoomLayer'],
  ['i', 'zoomOne', 1], ['i', 'zoomLast'], ['i', 'zoomNext', 1], ['i', 'mapNew'], ['i', 'map3d'], ['i', 'bookNew'], ['i', 'bookmark'], ['i', 'clock'], ['i', 'refresh'],
  ['h', 'w-[16px]'], ['i', 'identify'], ['i', 'table'], ['i', 'abacus'], ['i', 'gear'], ['i', 'sigma'], ['i', 'ruler'], ['a', 'w-[13px]'],
  ['i', 'maptip'], ['i', 'gearCursor', 1], ['a', 'w-[14px]', 1], ['i', 'textAnn'], ['a', 'w-3'], ['h', 'w-[17px]'],
];
const ROW1B = [['i', 'selExpr'], ['a', 'w-3'], ['i', 'deselect'], ['a', 'w-3'], ['i', 'selLoc']];
const ROW2 = [
  ['h', 'w-[13px]'], ['i', 'pencils', 1], ['i', 'pencil'], ['i', 'saveEdit', 1], ['i', 'addPoly', 1], ['i', 'vertex', 1], ['a', 'w-3', 1],
  ['i', 'rowsEdit', 1], ['i', 'trash', 1], ['i', 'cut', 1], ['i', 'copy', 1], ['i', 'paste', 1], ['i', 'undo', 1], ['i', 'redo', 1],
  ['h', 'w-[16px]'], ['i', 'tag'], ['i', 'diagram'], ['s', 'w-2'], ['i', 'tagPin'], ['i', 'tagRed'], ['s', 'w-2'],
  ['i', 'tagPinG', 1], ['i', 'tagEye', 1], ['i', 'tagMove', 1], ['i', 'tagRot', 1], ['i', 'tagEdit', 1],
  ['h', 'w-[17px]'], ['b', 'metasearch'], ['h', 'w-[17px]'], ['i', 'python'], ['i', 'earth'], ['i', 'infoGreen'], ['i', 'swipe'],
  ['h', 'w-[16px]'], ['i', 'help'], ['h', 'w-[16px]'], ['i', 'checkGeom'], ['i', 'tableRef'], ['h', 'w-[16px]'], ['i', 'greenLens'], ['i', 'brushMap'], ['h', 'w-[22px]'],
];

const MENU = [['Pro', 'j', 'ect'], ['', 'E', 'dit'], ['', 'V', 'iew'], ['', 'L', 'ayer'], ['', 'S', 'ettings'], ['', 'P', 'lugins'], ['Vect', 'o', 'r'], ['', 'R', 'aster'], ['', 'D', 'atabase'], ['', 'W', 'eb'], ['', 'M', 'esh'], ['Pro', 'c', 'essing'], ['', 'H', 'elp']];

const Check = ({ on = true }) => (
  <span className="flex size-[14px] shrink-0 items-center justify-center border border-[#b9b9b9] bg-white">
    {on && <svg viewBox="0 0 12 12" className="size-[11px]"><path d="M1.500 6l1.800-.5 1.700 2.800Q6.800 3 9.800.8l1 .4Q7.500 4.500 5.600 11H4.500z" fill="#111" /></svg>}
  </span>
);
const PanelButtons = () => (
  <span className="flex gap-[3px]">
    <svg viewBox="0 0 11 11" className="size-[11px]"><rect x=".5" y=".5" width="10" height="10" rx="2" fill="none" stroke="#555" /><path d="M4.500 2.500h4v4h-4z M2.500 4.500h4v4h-4z" fill="#efefef" stroke="#555" strokeWidth=".9" /></svg>
    <svg viewBox="0 0 11 11" className="size-[11px]"><rect x=".5" y=".5" width="10" height="10" rx="2" fill="none" stroke="#555" /><path d="M3 3l5 5M8 3L3 8" stroke="#444" strokeWidth="1.800" /></svg>
  </span>
);
const BTN = 'flex items-center justify-center rounded-[3px] border border-[#b0b0b0] bg-linear-to-b from-[#fefefe] to-[#ececec] whitespace-nowrap';

/* ---------- map ---------- */

function rng(seed) {
  let s = seed;
  return () => { s = (s * 16807) % 2147483647; return s / 2147483647; };
}
/* Adds small irregularities along every edge that is not on a grid line */
const LINES = [31, 313, 594, 875, 1156, 1437, 1717];
const near = (v) => LINES.some((l) => Math.abs(v - l) < 6);
function rough(str, amp, ox) {
  const p = str.split(' ').map((q) => q.split(',').map(Number));
  const r = rng(Math.round(p[0][0] * 31 + p[0][1] * 17 + 7));
  const out = [];
  p.forEach(([x, y], i) => {
    const [u, v] = p[(i + 1) % p.length];
    out.push(`${x},${y}`);
    const d = Math.hypot(u - x, v - y);
    if (near(x + ox) && near(u + ox) && Math.abs(x - u) < 6) return;
    const n = Math.floor(d / 9);
    for (let k = 1; k < n; k++) out.push(`${(x + ((u - x) * k) / n + (r() - 0.5) * amp).toFixed(1)},${(y + ((v - y) * k) / n + (r() - 0.5) * amp).toFixed(1)}`);
  });
  return out.join(' ');
}
/* Patchwork of small irregular parcels inside a rectangle */
function parcels(x0, y0, w, h, size, fill, seed) {
  const r = rng(seed * 977);
  const out = [];
  const split = (x, y, a, b, depth) => {
    if (depth > 0 && Math.max(a, b) > size * (0.9 + r())) {
      const t = 0.3 + r() * 0.4;
      if (a > b) { split(x, y, a * t, b, depth - 1); split(x + a * t, y, a * (1 - t), b, depth - 1); }
      else { split(x, y, a, b * t, depth - 1); split(x, y + b * t, a, b * (1 - t), depth - 1); }
      return;
    }
    if (r() > fill) return;
    const n = 4 + Math.floor(r() * 4), ph = r() * 6.280;
    const pts = [];
    for (let k = 0; k < n; k++) {
      const an = ph + ((k + r() * 0.5) * 6.280) / n, m = 0.46 + r() * 0.26;
      const px = Math.min(x0 + w, Math.max(x0, x + a / 2 + Math.cos(an) * a * m));
      const py = Math.min(y0 + h, Math.max(y0, y + b / 2 + Math.sin(an) * b * m));
      pts.push(`${px.toFixed(1)},${py.toFixed(1)}`);
    }
    out.push(pts.join(' '));
  };
  split(x0, y0, w, h, 9);
  return out;
}

const C = '#fff5eb';
const COL = { 1: '#dd7da0', 2: '#e8bd86', 3: '#4fbfdd', 4: '#cf6fa7', 7: '#2c73d9', 8: '#d1ec22', 9: '#d972bd', 10: '#1089d8', 11: '#ec70e4', 13: '#92c95c', 14: '#84ee78', 15: '#a94fce', 16: '#4ad8d9', 17: '#6acfab', 18: '#d8431f', 19: '#5641cd', 20: '#7579d9', 21: '#761ccb', 22: '#cbb060', 23: '#d84e68', 24: '#5acb26', 25: '#adee20', 26: '#6cd99c', 27: '#cf7c7e', 28: '#cdc422', 29: '#32e35c', 30: '#d81eef', 31: '#6522e9', 32: '#31c9b2', 33: '#3157d3', 34: '#61e763', c: C, w: '#ffffff' };

const BOUNDARY = '347,130 347,160 318,178 303,230 303,320 240,420 205,470 203,495 175,580 108,570 104,618 150,665 185,665 130,680 75,740 36,795 31,835 80,850 165,880 313,1010 358,1005 383,1045 420,1095 455,1125 525,1132 590,1220 640,1250 678,1270 678,1340 670,1380 697,1397 685,1440 687,1480 740,1512 755,1545 785,1543 855,1520 883,1550 891,1620 903,1654 975,1656 1008,1667 1102,1628 1117,1630 1155,1605 1172,1585 1172,1550 1185,1520 1191,1480 1204,1448 1193,1420 1188,1405 1184,1380 1227,1361 1275,1381 1317,1379 1383,1357 1418,1362 1448,1422 1455,1375 1502,1281 1477,1223 1502,1175 1514,1142 1475,1105 1400,1057 1367,1019 1402,991 1455,1008 1590,1042 1621,1026 1648,968 1618,915 1660,875 1661,860 1675,790 1670,690 1678,650 1673,578 1645,500 1595,390 1535,305 1533,220 1496,127 1445,106 1373,117 1330,149 1285,145 1230,155 1156,125 1140,155 1105,135 1055,123 1020,150 960,130 875,60 700,60 500,100';

const TILE_A = [
  [1, '92,25 311,25 311,124 298,115 286,126 278,102 240,124 222,120 205,126 188,124 178,130 165,112 154,108 137,78 148,66 144,56 71,52 72,42'],
  [1, '289,197 311,203 311,297 303,297 301,270 294,262 300,240 296,215'],
  ['w', '313,118 330,120 345,130 347,160 318,178 313,190'],
  [7, '313,25 593,25 593,188 575,196 560,200 545,192 520,198 505,205 495,220 497,235 480,240 468,240 450,225 415,220 378,190 347,168 345,128 330,120 313,120'],
  ['w', '500,25 496,45 503,68 520,60 537,72 534,58 542,50 528,44 536,25'], ['w', '458,25 462,32 478,32 480,25'],
  [7, '325,190 350,180 365,180 378,200 375,225 350,240 330,225'], [7, '350,238 376,228 410,235 440,232 455,240 450,262 475,275 482,300 430,300 430,280 400,270 380,275 350,262'],
  [7, '315,303 318,285 340,265 360,275 365,303'], [7, '515,250 530,228 575,228 592,220 592,304 570,296 540,304 512,290'], [7, '372,275 385,270 392,300 375,300'], [7, '505,212 530,205 533,222 510,232'], [7, '570,205 592,195 592,225 575,222'],
  [13, '595,25 810,25 808,40 825,45 840,30 855,40 865,45 875,50 875,182 845,180 862,158 856,145 845,165 820,180 800,168 785,150 760,142 752,155 760,175 745,170 730,180 715,205 680,218 650,208 625,180 610,160 595,145'],
  [13, '595,150 615,170 645,205 650,215 680,220 720,205 735,185 750,170 765,178 785,200 780,245 770,304 757,300 745,255 735,280 725,304 595,304'],
  [13, '813,225 828,195 848,185 850,230 832,260 822,250 830,230'], [13, '795,282 820,280 835,290 850,272 870,304 793,304'], ['c', '810,30 826,27 822,44 812,38'], ['w', '858,28 875,26 875,48 865,42'],
  [2, '222,328 243,316 262,328 285,345 270,372 250,377 237,345'], [2, '290,340 303,320 312,325 312,372 300,365 285,350'], [2, '218,382 265,378 270,400 268,430 240,432 240,448 265,440 262,455 240,453 228,440 215,410'], [2, '278,460 290,452 295,435 312,445 312,485'],
  [2, '175,586 172,545 180,512 210,485 248,475 248,540 235,545 215,535 200,545 195,586'], [2, '250,503 268,508 268,540 252,540'], [2, '270,508 312,500 312,552 270,543'], [2, '222,586 220,560 235,543 268,543 312,555 312,586'],
  [8, '313,320 330,335 325,365 313,370'], [8, '350,310 380,305 378,330 350,330'], [8, '382,308 415,305 417,325 400,345 380,335'], [8, '420,320 478,308 478,345 470,375 455,358 420,347 400,360 385,380 398,405 362,402 370,375 390,350'],
  [8, '412,385 440,377 470,385 490,380 497,420 470,415 430,412 410,400'], [8, '455,430 495,425 497,465 470,462 445,450'], [8, '313,420 335,425 330,450 313,455'], [8, '325,440 350,436 400,432 400,450 388,480 372,500 345,475 322,470 313,465'], [8, '313,515 345,512 395,525 390,542 313,548'],
  [8, '500,460 530,465 540,490 592,460 592,565 575,545 540,548 525,525 505,500'], [8, '532,490 592,460 592,520 550,515'], [8, '500,422 545,425 545,458 500,458'], [8, '380,480 405,470 405,500 385,505'], [8, '407,462 412,490 430,482 445,495 475,500 500,515 490,480 475,482 470,490 500,512 460,513 420,500 408,490'], [8, '313,586 330,565 350,575 372,560 378,586'], [8, '388,586 400,575 430,562 460,570 490,555 530,548 530,586'], [8, '560,586 555,560 592,560 592,586'], [8, '508,520 530,530 535,545 505,545'],
  [14, '597,310 640,318 640,345 600,345'], [14, '642,312 680,308 685,330 665,345 645,335'], [14, '690,320 700,310 730,325 725,345 700,345'], [14, '597,350 640,350 660,375 600,380'], [14, '665,350 720,345 700,380 670,372'], [14, '605,385 665,380 665,410 640,408'],
  [14, '790,315 798,305 845,305 845,325 815,330 805,355 790,355'], [14, '850,305 875,305 875,390 860,380 855,355 830,340'], [14, '800,365 835,362 870,392 865,405 845,415 800,400'], [14, '820,470 835,440 860,430 875,435 875,530 840,510 805,490'], [14, '615,500 660,475 682,480 680,540 660,535 640,515'], [14, '597,425 640,430 665,430 660,450 640,455 597,440'], [14, '597,562 670,575 672,586 597,586'], [14, '640,500 660,490 682,540 650,530'],
  [3, '182,605 220,590 240,605 228,625 205,650 185,625'], [3, '222,588 250,588 270,610 250,610'], [3, '215,640 235,608 311,650 311,705 265,695 190,670 195,650'], [3, '240,605 311,588 311,645 280,630'], [3, '130,670 180,665 215,680 220,735 190,725 185,705 150,708 122,695'], [3, '75,738 120,735 125,705 160,730 190,732 180,755 130,765 100,750'],
  [3, '225,685 311,710 311,860 280,845 255,810 220,785 220,735'], [3, '145,770 220,785 230,820 255,845 230,850 190,865 150,855 130,830 150,800'], [3, '31,800 50,765 60,795 75,790 72,820 50,845 31,835'], [3, '75,810 130,805 132,830 110,845 80,828'], [3, '225,820 265,825 270,845 240,852 225,840'], [3, '100,785 145,775 140,800 100,800'], ['c', '255,705 275,712 270,720 252,715'], ['c', '140,708 185,705 190,730 155,720'],
  [9, '313,588 594,588 594,866 313,866'],
  ['c', '340,640 360,638 368,655 355,690 350,710 340,700 338,665'], ['c', '385,655 400,650 440,700 435,712 405,700'], ['c', '430,605 465,598 480,588 498,590 500,640 495,655 480,650 470,610 440,612'], ['c', '525,588 594,588 594,640 560,640 525,625'], ['c', '455,730 480,705 500,700 525,710 515,735 480,745 460,742'], ['c', '555,705 585,665 594,672 594,685 565,715'], ['c', '350,792 375,785 390,795 405,805 400,820 370,838 345,815'], ['c', '430,775 455,795 470,820 500,835 480,850 455,866 463,830 440,800'], ['c', '560,825 594,800 594,866 540,866 545,840'], ['c', '313,640 335,690 330,705 313,705'], ['c', '380,770 395,775 405,795 390,800'], ['c', '500,835 530,790 550,800 555,820 530,830 520,866 505,866'], ['c', '313,588 345,600 340,605 313,610'],
  [15, '595,640 625,655 640,670 640,730 600,775 597,770'], [15, '625,650 650,635 700,650 705,665 670,680'], [15, '665,690 705,670 705,712 685,715'], [15, '708,675 735,672 738,715 712,730'], [15, '620,790 680,735 706,715 712,790 705,862 660,862 625,850 615,810'], [15, '738,650 765,640 772,655 760,700 740,707 730,690'], [15, '772,590 800,590 818,640 805,708 780,705'], [15, '710,600 740,595 745,640 725,655 710,645'], [15, '715,790 735,800 745,780 765,835 755,865 715,865'], [15, '820,598 875,592 875,650 850,645 835,625'], [15, '825,780 850,762 875,753 875,790 855,795'], [15, '770,840 795,835 815,850 865,850 865,865 770,865'], [15, '640,590 690,588 700,602 660,618'], [15, '597,590 620,588 620,610 597,620'], [15, '752,785 765,775 790,860 770,865'], [15, '745,590 765,588 765,620 745,625'], [15, '770,730 792,740 780,760 765,750'], [21, '875,753 889,748 888,785 875,790'],
];
const TILE_B = [
  [19, '20,45 55,30 100,25 98,45 78,55 88,75 105,75 100,100 88,120 75,145 55,170 40,180 22,178'], [19, '110,25 140,25 138,31 112,31'], [19, '265,25 300,25 300,190 290,160 275,155 245,125 225,122 195,112 225,75 250,62'], [19, '105,125 130,112 150,120 165,128 162,150 148,165 130,150 115,145'],
  [19, '45,215 60,165 85,145 110,170 130,180 145,190 120,205 100,195 75,210 50,230'], [19, '22,230 50,245 65,262 85,250 105,265 95,303 22,303'], [19, '110,225 145,178 170,178 190,200 212,215 205,235 165,262 150,285 175,303 110,303'], [19, '202,185 215,168 240,180 242,195 215,195'], [19, '205,240 230,228 258,238 258,250 225,250'], [19, '275,255 295,250 298,262 275,262'], [19, '160,270 195,258 198,280 170,283'],
  [25, '301,25 390,25 375,50 378,75 355,68 345,82 332,80 332,62 322,70 325,95 301,88'], [25, '301,122 330,145 360,155 378,165 420,163 432,185 447,208 428,215 405,232 365,220 345,222 301,230'], [25, '312,285 330,268 350,240 362,250 365,275 380,290 380,303 320,303'], [25, '408,252 420,250 422,258 412,258'], [25, '430,262 462,265 462,285 475,290 475,303 428,303'], [25, '497,268 512,262 515,275 500,278'], [25, '510,303 520,265 545,270 570,290 580,285 580,303'],
  [31, '582,258 620,258 630,265 665,258 650,290 625,300 582,303'], [31, '671,220 700,205 720,222 737,258 708,284 685,270 672,245'], [31, '660,270 672,262 670,285 660,298'], [31, '622,195 630,195 632,203'],
  [20, '20,306 190,306 175,330 185,345 215,350 240,340 270,345 300,335 300,460 275,490 235,500 180,505 130,480 60,430 75,405 110,378 85,380 60,400 45,388 20,395'], ['c', '200,455 255,410 265,425 215,455'], [20, '22,440 50,430 180,505 110,515 60,530 22,550'], [20, '190,520 235,510 238,545 225,575 190,540'], [20, '245,555 270,550 270,586 245,586'], [20, '280,520 300,518 300,555 285,540'], [20, '200,310 235,315 225,330 200,325'], [20, '255,320 285,312 290,328 262,335'],
  [26, '303,306 345,306 410,310 412,330 370,335 370,380 365,400 325,420 303,430'], [26, '375,380 420,365 425,340 450,335 490,350 500,320 580,330 580,390 525,430 490,395 375,402'], [26, '340,430 370,405 492,395 495,430 490,455 462,495 440,490 405,450 385,490 370,470 340,470'], ['c', '465,405 490,398 488,415'], [26, '500,435 545,440 575,460 560,490 500,500'], [26, '303,520 360,520 365,575 340,585 303,585'], [26, '362,503 397,505 395,540 380,550 365,540'], [26, '400,508 437,510 432,583 375,583 378,555 395,545'], [26, '445,520 487,525 487,583 445,583 437,560'], [26, '443,505 485,505 485,520 443,517'], [26, '493,510 497,510 497,540 520,543 520,515 540,510 545,583 493,583'], [26, '548,540 580,540 580,585 548,585'], [26, '430,310 475,306 475,330 460,320 440,325'], [26, '530,510 555,510 545,525'], [26, '555,400 580,390 580,425 560,425'],
  [32, '583,308 635,308 612,345 610,415 583,430'], [32, '617,320 646,318 646,410 612,415'], [32, '650,318 665,312 697,335 697,365 680,372 650,350'], [32, '678,378 700,380 740,412 738,422 700,405'], [32, '630,413 643,413 643,490 600,495 600,487 630,480'], [32, '653,415 668,415 668,432 680,440 695,472 668,475 653,495'], [32, '713,508 755,508 775,525 780,550 745,548 740,567 715,567 715,548 730,540 730,527 713,527'], [32, '595,515 615,510 620,530 605,560 590,545'], [32, '612,560 640,505 640,560'], [32, '643,505 667,503 665,560 643,560'], [32, '669,503 697,503 690,520 690,545 669,545'], [32, '672,560 690,555 697,575 680,583'], [32, '583,565 625,570 610,586 583,586'],
  [21, '35,600 45,590 97,588 95,620 75,680 35,660 20,640'], [21, '105,590 132,588 140,600 110,600'], [21, '135,595 150,588 170,600 160,615 135,605'], [21, '205,600 235,590 250,615 300,588 300,665 265,670 262,692 230,695 200,705 190,722 170,720 168,702 190,685 210,655 230,630'], [21, '115,650 140,645 143,665 130,685 110,670'], [21, '75,688 95,695 100,710 85,715'], [21, '285,800 300,800 300,815 285,813'], [21, '180,600 200,595 215,615 195,625'], [21, '195,630 215,635 222,648 205,640'], [21, '162,630 172,628 172,640 162,642'],
  [27, '310,590 358,588 360,605 340,610 335,625 315,610'], [27, '303,625 335,632 345,620 367,640 365,655 350,678 320,665 303,650'], [27, '437,590 490,590 487,622 460,622 430,605'], [27, '492,598 518,598 518,622 490,618'], [27, '560,590 582,588 582,630 560,610'], [27, '492,630 545,620 553,640 567,700 565,742 512,735 493,660'], [27, '437,658 455,665 485,650 487,675 445,695 437,680'], [27, '385,660 395,643 402,655 398,665'], [27, '352,745 365,733 410,740 437,755 437,797 420,780 370,785 355,770'], [27, '403,725 435,745 438,757 420,752'], [27, '478,740 485,733 500,742 507,760 480,765'], [27, '303,802 342,800 349,825 345,848 330,840 330,820 303,815'], [27, '522,795 547,795 547,850 520,850'], [27, '315,780 322,778 322,787'],
  [33, '583,590 608,590 608,610 600,635 583,632'], [33, '715,600 735,597 740,585 750,585 750,600 740,603 738,640 712,640'], [33, '700,655 752,650 750,672 738,695 697,690'], [33, '587,683 625,680 657,660 655,680 640,700 630,690 610,705 590,692'], [33, '655,587 680,587 680,597 655,595'], [33, '670,700 688,693 690,715 672,712'], [33, '697,705 735,700 735,715 700,714'], [33, '762,672 800,690 806,705 790,700 780,710 762,695'], [33, '695,732 775,768 775,800 790,830 780,845 735,808 710,835 693,838'], [33, '800,705 815,720 835,735 853,712 850,735 830,750 825,780 815,800 790,800 778,785 808,778 815,740'], [33, '585,785 600,765 650,770 648,793 620,788 600,797'], [33, '668,838 690,850 715,850 718,860 690,862'], [33, '755,755 772,738 785,770'], [33, '785,800 815,825 805,845 792,840'], [33, '705,718 730,722 725,732'],
];
const TILE_C = [
  [4, '140,32 311,28 311,175 300,170 298,145 285,135 240,142 232,165 240,190 205,150 213,130 203,120 205,85 188,70 170,68 165,40'], [4, '240,145 285,138 298,160 272,190 245,195 232,172'], ['c', '277,32 311,30 311,55 280,52'],
  [10, '313,50 350,92 385,85 420,110 430,130 415,150 380,155 345,162 313,173'], [10, '318,30 345,45 378,85 355,92 330,65'], [10, '375,50 400,40 403,55 385,68'], [10, '440,52 480,42 490,70 475,75'], [10, '490,42 530,45 510,70 480,70'], [10, '520,30 560,60 545,65 520,50'], [10, '570,45 592,30 592,72 570,65'], [10, '422,100 430,88 455,95 455,115 442,128 422,120'], [10, '487,98 505,80 592,80 592,120 575,165 520,145'], [10, '443,170 460,140 490,137 520,160 527,200 510,203 500,218 470,210 450,190'], ['c', '462,165 480,148 505,165 510,190 495,202 475,195'], [10, '535,165 570,178 592,188 592,262 545,258 533,200'], [10, '360,165 378,165 380,200 358,198'], [10, '377,240 400,232 413,250 375,280'], [10, '452,275 480,257 513,272 500,287 460,285'], [10, '580,290 592,290 592,305 582,305'], [10, '545,265 555,262 557,272'], [10, '570,268 592,262 592,280'], [10, '365,30 392,28 388,42'], [10, '408,35 420,28 445,42 430,42'],
  [11, '555,365 567,352 580,365 592,380 588,395 570,413 555,398 560,380'],
  [16, '660,55 680,40 720,60 725,105 740,110 770,130 760,150 735,165 758,190 755,215 720,200 690,195 670,165 640,125 625,120 640,90'], [16, '645,200 665,188 700,195 715,210 713,272 672,284 635,262 650,240'], ['c', '670,240 676,230 688,230 694,242 688,254 676,254'], [16, '708,30 780,30 782,80 765,90 770,105 740,105 735,65 715,55'], [16, '797,30 820,28 820,85 800,80'], [16, '822,28 845,28 848,90 830,100 822,80'], [16, '848,28 875,28 875,130 855,155 835,130 830,100 850,90'], [16, '800,90 820,85 830,130 810,140'], [16, '597,190 612,185 613,262 597,262'], [16, '597,285 620,283 622,318 597,318'], [16, '835,205 850,178 875,185 875,225 845,215'], [16, '815,280 850,298 840,312 810,315'], [16, '752,230 770,228 768,245 752,243'], [16, '785,95 795,95 810,130 805,150 790,145'], [16, '808,185 812,165 830,150 835,165 825,180'], [16, '797,255 815,240 812,258'], [16, '597,90 607,95 605,118 597,118'], [16, '605,165 615,165 615,175 605,175'], [16, '668,30 690,28 700,42 690,42'],
  [17, '617,380 645,370 665,375 675,400 630,400'], [17, '622,402 675,408 678,428 645,418'], [17, '805,330 820,320 845,330 843,360 855,395 830,418 808,395 815,370 803,360'], [17, '795,365 803,362 812,395 825,415 800,405'], [17, '850,345 872,342 872,380 852,380'], [17, '705,350 722,338 728,352 740,360 722,378 710,365'], [17, '690,400 705,395 708,415 690,420'], [17, '650,490 660,480 665,500 685,505 680,520 665,532 650,520'], [17, '765,470 775,460 805,462 808,490 800,505 760,490'], [17, '772,532 805,535 862,580 860,588 815,580'], [17, '805,525 820,505 838,515 840,545 860,565 855,575 815,540'], [17, '845,420 872,418 872,460 848,440'], [17, '835,460 850,448 870,470 865,490 845,485'], [17, '735,590 732,578 750,560 750,575'], [17, '728,465 737,480 750,488 740,490 745,508 735,498 730,482'], [17, '680,438 692,435 690,445'], [17, '655,325 675,318 688,300 680,290 700,295 708,290 702,310 715,328 690,315 670,328'], [17, '648,348 658,350 668,372'], [17, '677,470 690,462 695,478'], [17, '845,520 862,515 860,540 845,535'],
  [18, '712,600 720,590 742,590 722,613'], [18, '825,592 862,592 845,613'], [18, '748,630 763,615 762,638 750,645'], [18, '666,645 690,636 688,648 678,648 685,658'], [18, '757,652 773,662 765,664'], [18, '860,618 868,618 868,626 860,624'],
];
const TILE_D = [
  [22, '20,30 48,50 85,48 88,85 75,115 20,108'], [22, '20,32 46,55 30,88 20,90'], [22, '48,118 63,118 62,137 48,133'], [22, '65,32 78,30 75,40 67,40'], [22, '85,37 105,42 100,45'], [22, '110,82 145,90 145,97 108,92'], [22, '83,98 96,96 95,106 85,106'], [22, '155,110 165,100 195,105 206,125 200,138 180,135 158,120'], [22, '62,170 62,152 85,155 105,140 155,132 150,145 115,158 85,163'], [22, '195,155 215,160 210,170'], [22, '180,185 190,190 188,200'], [22, '20,195 35,202 33,218 20,222'], [22, '23,240 40,237 60,250 68,270 45,268 28,255'], [22, '198,285 205,275 220,265 228,237 236,240 225,278'], [22, '255,238 270,233 282,220 285,228 268,240 265,255 253,245'],
  [28, '432,45 442,47 453,68 445,76 432,60'], [28, '405,125 425,107 433,115 415,130'], [28, '366,130 390,138 378,155 368,160 375,145'], [28, '438,165 455,178 475,162 495,162 492,178 480,190 442,188'], [28, '350,190 375,185 375,205 352,208'], [28, '292,190 318,185 322,200 302,205'], [28, '550,120 557,116 578,130 570,140'], [28, '552,85 580,80 587,95 570,103 555,95'], [28, '452,250 470,238 482,250 475,272 455,262'], [28, '363,268 380,262 382,274'],
  [34, '763,30 815,25 817,40 795,55 763,55'], [34, '585,128 640,155 680,158 672,172 640,177 600,150'], [34, '747,150 768,148 768,175 752,178'],
  [23, '22,418 40,422 45,440 55,445 55,470 40,475 22,455'], [23, '60,445 85,437 107,455 95,465 75,468 70,487 62,470'], [23, '45,492 82,515 60,535 50,545 38,515'], [23, '20,515 30,518 48,560 45,578 20,572'], [23, '62,372 75,375 86,390 75,388'], [23, '168,408 180,402 197,403 196,418 170,420'], [23, '220,408 255,399 255,412'], [23, '148,440 168,432 160,450 158,475 148,465'], [23, '95,575 110,565 135,572 140,588 93,590'], [23, '145,570 160,570 178,580 175,588 148,588'], [23, '103,535 130,540 143,530 142,546 110,545'], [23, '113,498 130,502 122,508'], [23, '45,540 70,535 70,552 55,555'], [23, '20,455 32,480 20,485'], [23, '75,562 90,570 80,580'], [23, '42,580 60,575 62,588'],
  [24, '47,600 62,592 145,590 155,630 143,640 147,665 130,680 115,668 95,688 82,672 95,655 60,655'], [24, '172,640 188,630 194,645 178,652'], [24, '185,660 210,642 235,640 232,655 190,665'], [24, '155,675 165,655 175,683'], [24, '182,740 198,723 214,742 200,756'], [24, '92,780 117,774 118,790 95,795'], [24, '208,690 222,690 235,712 255,712 235,730 215,712'], [24, '285,680 292,662 298,685'], [24, '262,790 300,768 300,868 275,866 270,850 252,843 262,820'], [24, '150,590 175,595 172,612 160,610'], [24, '135,690 150,685 145,698'], [24, '192,710 203,708 200,718'],
  [29, '407,430 412,423 425,432 462,415 470,430 475,458 448,476 415,460'], [29, '533,380 548,368 556,385 545,400'], [29, '305,372 322,366 315,374'], [29, '353,370 362,362 358,375'], [29, '328,584 335,576 347,577 352,588 330,588'], [30, '330,590 350,591 340,599'],
  [30, '302,768 318,735 330,755 345,750 372,758 372,795 378,815 365,825 335,822 320,840 328,866 302,868'],
];
const PARCELS = [
  [0, 8, parcels(480, 308, 112, 110, 14, 0.9, 11)], [0, 8, parcels(545, 420, 48, 45, 12, 0.8, 5)],
  [0, 14, parcels(600, 410, 60, 90, 16, 0.7, 21)], [0, 14, parcels(660, 380, 125, 125, 16, 0.7, 31)], [0, 14, parcels(600, 505, 80, 50, 14, 0.7, 8)], [0, 14, parcels(765, 380, 90, 100, 18, 0.4, 44)], [0, 14, parcels(690, 510, 110, 70, 12, 0.15, 9)],
  [0, 7, parcels(335, 200, 140, 70, 13, 0.55, 71)], [0, 7, parcels(530, 225, 60, 60, 15, 0.8, 72)],
  [0, 15, parcels(755, 600, 118, 75, 17, 0.55, 3)], [0, 15, parcels(640, 600, 70, 50, 14, 0.25, 13)], [0, 15, parcels(815, 660, 58, 90, 12, 0.3, 6)],
  [0, 9, parcels(530, 775, 62, 60, 16, 0.7, 14)],
  [0, 10, parcels(318, 868, 50, 20, 12, 0.5, 15)], [0, 16, parcels(780, 868, 92, 80, 17, 0.75, 16)], [0, 16, parcels(600, 868, 50, 20, 12, 0.3, 2)],
  [855, 20, parcels(22, 430, 70, 155, 14, 0.7, 41)], [855, 20, parcels(90, 525, 55, 60, 15, 0.7, 42)], [855, 20, parcels(150, 310, 140, 45, 13, 0.4, 43)],
  [855, 21, parcels(20, 590, 55, 80, 13, 0.7, 51)], [855, 21, parcels(60, 650, 80, 70, 13, 0.35, 52)], [855, 19, parcels(40, 180, 120, 80, 14, 0.4, 53)], [855, 26, parcels(500, 440, 80, 60, 17, 0.7, 54)], [855, 26, parcels(303, 310, 35, 50, 12, 0.8, 55)],
];
const TRACKS = [
  'M540,110L575,192M593,135L560,110L545,70', 'M595,150L680,218L680,304M645,205L600,250M680,235L745,228', 'M665,210L650,165L640,190M680,304L620,265',
  'M497,380L500,470L520,520L550,550', 'M595,390L700,320M640,310L600,360M700,330L735,390', 'M380,545L365,620M313,605L440,605L450,590',
  'M340,590L365,640L330,690M368,650L470,770L500,790M313,735L365,745L430,735L490,690L530,660M370,745L365,790L313,850M525,588L525,640L510,690M545,710L540,725L594,760',
  'M395,740L460,790L550,770L594,740M440,690L480,660M480,785L540,810M600,700L594,700',
  'M705,670L715,735L770,750M665,690L620,650M640,740L670,720L706,715M650,820L625,850M665,790L705,830M765,750L780,865M713,740L710,865',
  'M250,475L250,586M190,640L230,600M255,660L311,710M220,785L255,690M145,770L215,735',
  'M920,430L1010,495L1060,500M875,410L960,480M960,380Q955,440 1040,440Q1120,420 1130,380L1125,365L1055,345M875,500L1010,510L910,520M910,310L930,345L970,340L950,370L900,350M1050,470L1070,480L1120,450L1156,440M900,450L960,586M930,430L880,560',
  'M940,120L900,170M960,140L975,180L965,230L985,300M1105,65L1156,87M1228,400L1350,395M1230,335L1228,400', 'M1156,440L1180,415',
  'M1525,247L1565,222', 'M885,600L945,655L965,690', 'M780,45L800,80M785,70L805,50M790,90L785,60',
  'M1157,1610L1195,1630L1197,1650L1230,1662', 'M670,910L690,900L705,920M650,925Q680,900 690,930', 'M560,968Q575,955 592,965M435,930L440,965',
];

const Tile = ({ x, y, data }) => (
  <g transform={`translate(${x} ${y})`}>
    {data.map(([c, pts], i) => <polygon key={i} points={rough(pts, 4.5, x)} fill={COL[c]} stroke={c === 'w' ? '#555' : '#2b2b2b'} />)}
  </g>
);
const MapCanvas = () => (
  <svg viewBox="425 140 953 589" className="h-[589px] w-[953px]">
    <g transform="translate(610 145) scale(.33333)" strokeWidth="2.700" strokeLinejoin="round">
      <polygon points={BOUNDARY} fill={C} stroke="#111" strokeWidth="3" />
      <Tile x={0} y={0} data={TILE_A} />
      <Tile x={855} y={0} data={TILE_B} />
      <Tile x={0} y={840} data={TILE_C} />
      <Tile x={855} y={840} data={TILE_D} />
      {PARCELS.map(([ox, c, list], i) => (
        <g key={i} transform={`translate(${ox} 0)`}>{list.map((p, k) => <polygon key={k} points={p} fill={COL[c]} stroke="#2b2b2b" strokeWidth="2.400" />)}</g>
      ))}
      {TRACKS.map((d, i) => <path key={i} d={d} fill="none" stroke="#2b2b2b" strokeWidth="2.600" />)}
      <path d="M31 24H1717M31 304.500H1717M31 586H1717M31 867H1717M31 1148H1717M31 1429H1717M31 1709H1717M31.500 24V1709M313 24V1709M594 24V1709M875 24V1709M1156 24V1709M1437 24V1709M1717 24V1709" stroke="#222" strokeWidth="3.600" fill="none" />
    </g>
  </svg>
);

/* ---------- data ---------- */

const LAYERS = [
  { t: 'Grids', lvl: 0, exp: 'v', on: true, icon: 'group' },
  { t: 'Grid', lvl: 1, on: true, sw: 'border border-[#777] bg-white', bold: true, end: ['chip'] },
  { t: 'Intersection', lvl: 1, exp: '>', on: true, icon: 'polySel', sel: true, bold: true, end: ['chipW'] },
  { t: 'landuse [948]', lvl: 1, exp: '>', icon: 'poly', off: true, end: ['funnelG'] },
  { t: 'pois_cleaned [187]', lvl: 0, dot: 'bg-[#ee8f98]', off: true, end: ['chip', 'funnelG'] },
  { t: 'pofw', lvl: 0, dot: 'bg-[#0d9298]', off: true },
  { t: 'pois [4120]', lvl: 0, dot: 'bg-[#6b9c66]', off: true },
  { t: 'waterways', lvl: 0, line: 'bg-[#5ebcc0]', off: true },
  { t: 'roads', lvl: 0, line: 'bg-[#c6c6c6]', off: true },
  { t: 'buildings', lvl: 0, sw: 'bg-[#8db600]', off: true },
  { t: 'ETH_Addis_Ababa', lvl: 0, on: true, sw: 'border border-[#777] bg-[#fff5eb]', bold: true },
  { t: 'Voronoi', lvl: 0, exp: '>', icon: 'group' },
];
const ROWS = [['76', '27366996', '7203', 'residential', '16'], ['76', '27366996', '7203', 'residential', '15'], ['75', '27366994', '7204', 'industrial', '16'], ['74', '27365790', '7203', 'residential', '16'], ['80', '27397048', '7203', 'residential', '9'], ['79', '27397047', '7203', 'residential', '9'], ['78', '27367004', '7204', 'industrial', '16']];
const CATS = [1, 2, 3, 4, 7, 8, 9, 10, 11, 13, 14, 15, 16, 17, 18, 19, 20, 21, 22, 23, 24, 25, 26, 27, 28, 29, 30, 31, 32, 33, 34];

const VBAR = ['dsm', 'gpkg', 'shpNew', 'spatNew', 'memNew'];
const VBAR2 = ['vecAdd', 'rasAdd', 'meshAdd', 'csvAdd', 'spatAdd', 'virtAdd', 'pgAdd', 'wmsAdd', 'xyzAdd', 'wfsAdd', 'gpkg'];

const LayerRow = ({ l }) => (
  <div className={clsx('flex h-[19px] items-center', l.sel && 'bg-[#308cc6]')}>
    <div className={clsx('flex w-[20px] shrink-0 items-center justify-center', l.lvl ? 'ml-[20px]' : 'ml-0')}>
      {l.exp && <svg viewBox="0 0 8 8" className="size-2"><path d={l.exp === 'v' ? 'M0 2h8L4 6.500z' : 'M2 0v8l4.500-4z'} fill={l.sel ? '#123' : '#4f4f4f'} /></svg>}
    </div>
    <div className="ml-[3px]"><Check on={!!l.on} /></div>
    <div className="ml-[6px] flex w-4 shrink-0 items-center justify-center">
      {l.icon && <Icon n={l.icon} className="size-4" />}
      {l.sw && <div className={clsx('size-4', l.sw)} />}
      {l.dot && <div className={clsx('size-[7px] rounded-full border border-[#555]', l.dot)} />}
      {l.line && <div className={clsx('h-0.5 w-[15px]', l.line)} />}
    </div>
    <span className={clsx('grow leading-[17px] whitespace-pre', l.t === 'waterways' ? 'ml-[4px]' : 'ml-[6px]', l.bold && 'font-bold', l.sel && 'text-[#f3f8fc] underline underline-offset-2', l.off && 'font-bold text-[#808080] italic')}>{l.t}</span>
    <div className="mr-[5px] flex gap-[2px]">
      {(l.end || []).map((e) => <span key={e} className="flex size-[17px] items-center justify-center border border-[#e3e3e3] bg-[#f1f1f1]"><Icon n={e} className="size-[15px]" /></span>)}
    </div>
  </div>
);

const Tab = ({ active, children, w }) => (
  <div className={clsx('flex items-center justify-center rounded-b-[3px] border border-t-0 border-[#b4b4b4]', w, active ? 'h-[27px] bg-linear-to-b from-[#efefef] to-[#fbfbfb]' : 'h-[25px] bg-[#dcdcdc]')}>{children}</div>
);
const Spin = ({ w, children }) => (
  <div className={clsx('flex h-6 rounded-[3px] border border-[#b0b0b0] bg-white', w)}>
    <span className="flex grow items-center pl-1">{children}</span>
    <span className="flex w-[13px] flex-col items-center justify-center gap-1 border-l border-[#c0c0c0] bg-[#f5f5f5]"><Caret className="w-[7px] rotate-180" /><Caret className="w-[7px]" /></span>
  </div>
);

const ATT = [
  ['pencil'], ['rowsEdit', 1], ['saveEdit', 1], '|', ['addRow', 1], ['trash', 1], ['cut', 1], ['copy', 1], ['paste', 1], '|', ['selExpr'], ['selAll'], ['invert'], ['deselectOne'], ['funnel'], ['moveTop'], ['pan'], ['zoomY'], '|', ['colNew', 1], ['colNew', 1], ['colEdit'], ['abacus'], '|', ['cond'], '|',
];

const SIDE = ['tag', 'maskAbc', 'cube', 'tree', 'history'];
const VHandle = ({ h }) => <div className={clsx('flex items-center justify-center', h)}><div className="h-[6px] w-[18px] bg-[radial-gradient(#a8a8a8_0.9px,transparent_1px)] bg-[length:3px_3px]" /></div>;

export default function App() {
  return (
    <div className="flex h-[1082px] w-[1922px] flex-col overflow-hidden border border-[#a0a0a0] bg-[#efefef] font-['DejaVu_Sans',sans-serif] text-[13.150px] leading-none text-[#111]">
      <svg className="absolute size-0"><defs><linearGradient id="polyGrad" x1="0" y1="0" x2="1" y2="1"><stop offset="0" stopColor="#f6f6f6" /><stop offset="1" stopColor="#c0c0c0" /></linearGradient></defs></svg>

      <div className="grid h-[37px] shrink-0 grid-cols-[1fr_auto_1fr] items-center border-b border-[#222] bg-[#363636]">
        <span />
        <span className="font-['Noto_Sans',sans-serif] text-[12.300px] font-bold text-[#e8e8e8]">*fb-d4g-module8-eth — QGIS</span>
        <div className="flex items-center justify-end pr-[9px]">
          <div className="mt-2 mr-[26px] h-0.5 w-[7px] bg-white" />
          <div className="mr-[22px] size-[6px] border-[1.500px] border-white" />
          <div className="flex size-[18px] items-center justify-center rounded-full bg-[#e2642b]"><svg viewBox="0 0 8 8" className="size-2"><path d="M1 1l6 6M7 1L1 7" stroke="#fff" strokeWidth="1.600" /></svg></div>
        </div>
      </div>

      <div className="flex h-[22px] shrink-0 items-center gap-[14.600px] border-b border-[#d0d0d0] pl-[10px]">
        {MENU.map(([a, u, b]) => <span key={a + u + b}>{a}<span className="underline underline-offset-2">{u}</span>{b}</span>)}
      </div>

      <div className="flex h-[39px] shrink-0 border-b border-[#b8b8b8] bg-linear-to-b from-[#f7f7f7] to-[#eeeeee]">
        <T items={ROW1} />
        <div className="flex items-center pb-px">
          <div className="flex h-[31px] w-[31px] items-center justify-center rounded-[3px] border border-[#a8a8a8] bg-[#d8d8d8]"><Icon n="select" className="size-[22px]" /></div>
          <div className="mr-px flex h-[31px] w-3 items-center justify-center rounded-[3px] border border-[#b0b0b0] bg-[#d8d8d8]"><Caret className="w-[7px]" /></div>
        </div>
        <T items={ROW1B} />
      </div>
      <div className="flex h-[39px] shrink-0 border-b border-[#b8b8b8] bg-linear-to-b from-[#f7f7f7] to-[#eeeeee]">
        <T items={ROW2} />
      </div>

      <div className="flex h-[912px] shrink-0">
        {/* data source toolbar */}
        <div className="w-[50px] shrink-0 border-r border-[#c4c4c4] bg-linear-to-r from-[#fafafa] to-[#eeeeee]">
          <VHandle h="h-[13px]" />
          {VBAR.map((n) => <div key={n} className="flex h-8 items-center justify-center pl-0.5"><Icon n={n} className="size-[23px]" /></div>)}
          <div className="mx-auto my-[3px] h-px w-8 bg-[#ccc]" />
          <div className="flex h-8 items-center justify-center pl-0.5"><Icon n="virtNew" className="size-[23px]" /></div>
          <div className="mx-auto my-[3px] h-px w-8 bg-[#ccc]" />
          <VHandle h="h-[18px]" />
          {VBAR2.map((n) => <div key={n} className="flex h-8 items-center gap-[7px] pl-2"><Icon n={n} className="size-[23px]" />{(n === 'pgAdd' || n === 'gpkg') && <Caret className="w-[7px]" />}</div>)}
        </div>

        {/* layers panel */}
        <div className="ml-[2px] flex w-[365px] shrink-0 flex-col">
          <div className="flex h-[19px] shrink-0 items-center justify-between pr-[2px] pl-1">Layers<PanelButtons /></div>
          <div className="flex h-[31px] shrink-0 items-center pl-[4px]">
            <div className="flex h-[23px] w-6 items-center justify-center rounded-[3px] border border-[#a8a8a8] bg-[#dcdcdc]"><Icon n="brush" className="size-4" /></div>
            {['groupAdd', 'eye', 'funnelDd', 'exprF'].map((n) => <div key={n} className="flex w-[25.300px] justify-center"><Icon n={n} className="size-[15px]" /></div>)}
            <Caret className="ml-[2px] w-[7px]" />
            {['expand', 'collapse', 'removeL'].map((n) => <div key={n} className="flex w-[25.300px] justify-center"><Icon n={n} className="size-[15px]" /></div>)}
          </div>
          <div className="mb-px h-[833px] shrink-0 border border-[#b8b8b8] bg-white">
            {LAYERS.map((l) => <LayerRow key={l.t} l={l} />)}
          </div>
          <div className="flex border-t border-[#c4c4c4]">
            <Tab active w="w-[67px]">Layers</Tab><Tab w="w-[78px]">Browser</Tab>
          </div>
        </div>

        <div className="flex w-[6px] shrink-0 items-center justify-center"><div className="h-4 w-0.5 bg-[radial-gradient(#bbb_0.8px,transparent_0.9px)] bg-[length:3px_3px]" /></div>

        {/* map and attribute table */}
        <div className="flex w-[955px] shrink-0 flex-col pt-px">
          <div className="h-[591px] shrink-0 border border-[#b0b0b0] bg-white"><MapCanvas /></div>
          <div className="flex h-[6px] shrink-0 items-center justify-center"><div className="h-0.5 w-4 bg-[radial-gradient(#aaa_0.8px,transparent_0.9px)] bg-[length:3px_3px]" /></div>
          <div className="flex h-[20px] shrink-0 items-center justify-between pr-[2px] pl-2">Intersection — Features Total: 1150, Filtered: 1150, Selected: 0<PanelButtons /></div>
          <div className="flex h-[30px] shrink-0 items-center pb-0.5 pl-[2px]">
            {ATT.map((a, i) => a === '|' ? <div key={i} className="mx-[3.300px] h-4 w-px bg-[#ccc]" /> : <div key={i} className="flex w-[25px] justify-center"><Icon n={a[0]} dim={a[1]} className="size-4" /></div>)}
            <div className="flex h-[23px] w-6 items-center justify-center rounded-[3px] border border-[#a8a8a8] bg-[#dcdcdc]"><Icon n="dock" className="size-4" /></div>
            <div className="flex w-[25px] justify-center"><Icon n="gearPlay" className="size-4" /></div>
          </div>
          <div className="flex h-[234px] shrink-0 border border-[#b0b0b0]">
            <div className="flex grow flex-col overflow-hidden bg-white">
              <div className="flex h-[21px] shrink-0 bg-[#efefef]">
                <div className="flex w-[641px] border-b border-[#b0b0b0] bg-linear-to-b from-[#fdfdfd] to-[#ededed]">
                  <div className="w-[41px]" />
                  {['fid', 'osm_id', 'code', 'fclass', 'name', 'grid_id'].map((h) => <div key={h} className="flex w-[100px] items-center justify-center border-r border-[#c8c8c8] pt-px">{h}</div>)}
                </div>
              </div>
              {ROWS.map((r, i) => (
                <div key={i} className="flex h-[30px] w-[641px] shrink-0">
                  <div className="flex w-[41px] items-center border-r border-b border-[#b0b0b0] bg-linear-to-b from-[#fbfbfb] to-[#ececec] pt-0.5 pl-0.5">{i + 1}</div>
                  {[r[0], r[1], r[2], r[3], 'NULL', r[4]].map((v, k) => (
                    <div key={k} className={clsx('flex w-[100px] items-center border-r border-b border-[#c8c8c8] px-[3px]', i % 2 && 'bg-[#f7f7f7]', (k === 0 || k === 2 || k === 5) && 'justify-end', k === 4 && 'text-[#808080] italic')}>{v}</div>
                  ))}
                </div>
              ))}
            </div>
            <div className="flex w-[13px] shrink-0 flex-col items-center border-l border-[#b8b8b8] bg-[#dedede]">
              <div className="flex h-[13px] w-full items-center justify-center bg-[#f7f7f7]"><Caret className="w-[7px] rotate-180" /></div>
              <div className="h-[27px] w-full rounded-[2px] border border-[#b0b0b0] bg-[#fafafa]" />
              <div className="grow" />
              <div className="flex h-[13px] w-full items-center justify-center bg-[#f7f7f7]"><Caret className="w-[7px]" /></div>
            </div>
          </div>
          <div className="flex h-[30px] shrink-0 items-center justify-between pr-[2px] pl-[3px]">
            <div className={clsx(BTN, 'h-[24px] w-[153px] justify-start! pl-0.5')}><Icon n="funnel" className="mr-[2px] size-4" />Show All Features<Caret className="mt-3 mr-px ml-auto h-1 w-[6px]" /></div>
            <div className="flex items-center gap-[6px]"><Icon n="form" className="size-[14px]" /><div className="flex size-[23px] items-center justify-center rounded-[3px] border border-[#a8a8a8] bg-[#dcdcdc]"><Icon n="table" className="size-[15px]" /></div></div>
          </div>
        </div>

        {/* layer styling panel */}
        <div className="ml-[6px] flex w-[536px] shrink-0 flex-col">
          <div className="flex h-[22px] shrink-0 items-center justify-between pr-[3px] pb-[3px] pl-1">Layer Styling<PanelButtons /></div>
          <div className={clsx(BTN, 'mr-[2px] ml-[3px] h-[25px] shrink-0 justify-start! pl-[5px]')}><Icon n="poly" className="mr-[3px] size-4" />Intersection<Caret className="mr-2 ml-auto" /></div>
          <div className="flex h-[833px] shrink-0 pt-1.5">
            <div className="ml-[3px] w-[38px] shrink-0">
              <div className="flex h-8 items-center justify-center pr-1"><Icon n="brushBig" className="size-[20px]" /></div>
              <div className="h-[795px] bg-[#5d5d5d]">
                {SIDE.map((n) => <div key={n} className="flex h-8 items-center justify-center pr-[7px]"><Icon n={n} className="size-[21px]" /></div>)}
              </div>
            </div>
            <div className="mr-[2px] ml-[3px] flex grow flex-col">
              <div className={clsx(BTN, 'h-[25px] shrink-0 justify-start! pl-[7px]')}><Icon n="categ" className="mr-[3px] size-[14px]" />Categorized<Caret className="mr-2 ml-auto" /></div>
              <div className="mt-[6px] flex h-[25px] shrink-0 items-center">
                <span className="w-[79px]">Value</span>
                <div className="flex h-[25px] w-[380px] items-center rounded-[3px] border border-[#b0b0b0] bg-white"><span className="ml-[3px] text-[9.500px] font-bold tracking-[-.9px] text-[#444]">123</span><span className="ml-[6px]">grid_id</span><span className="ml-auto flex h-full w-5 items-center justify-center border-l border-[#c4c4c4]"><Caret /></span></div>
                <div className={clsx(BTN, 'ml-auto h-[25px] w-6')}><Icon n="eps" className="size-4" /></div>
              </div>
              <div className="mt-[6px] flex h-[23px] shrink-0 items-center">
                <span className="w-[79px]">Symbol</span>
                <div className={clsx(BTN, 'h-[23px] grow px-1')}><div className="h-[11px] grow border border-[#5a331c] bg-[#915230]" /></div>
                <div className={clsx(BTN, 'h-[23px] w-3')}><Caret className="w-[7px]" /></div>
              </div>
              <div className="mt-[6px] flex h-[28px] shrink-0 items-center">
                <span className="w-[79px]">Color ramp</span>
                <div className={clsx(BTN, 'h-[28px] grow')}>Random colors</div>
                <div className={clsx(BTN, 'h-[28px] w-3')}><Caret className="w-[7px]" /></div>
              </div>
              <div className="mt-[6px] h-[616px] shrink-0 border border-[#b0b0b0] bg-white">
                <div className="flex h-[21px] border-b border-[#b8b8b8] bg-linear-to-b from-[#fdfdfd] to-[#ededed]">
                  <span className="flex w-[81.500px] items-center justify-between border-r border-[#c8c8c8] pt-0.5 pr-1 pl-0.5">Symbol<Caret className="h-1 rotate-180" /></span>
                  <span className="flex w-[107px] items-center border-r border-[#c8c8c8] pt-0.5 pl-0.5">Value</span>
                  <span className="flex items-center pt-0.5 pl-0.5">Legend</span>
                </div>
                {CATS.map((c) => (
                  <div key={c} className="flex h-[18px] items-center pl-[3px]">
                    <Check /><span className="ml-[6px] size-4 border border-black/50" style={{ backgroundColor: COL[c] }} />
                    <span className="ml-[46px] w-[107px]">{c}</span><span>{c}</span>
                  </div>
                ))}
                <div className="flex h-[18px] items-center pl-[3px]"><Check /><span className="ml-[6px] size-4 border border-black/50 bg-[#e08a52]" /><span className="ml-[46px] text-[#808080] italic">all other values</span></div>
              </div>
              <div className="mt-[6px] flex h-[25px] shrink-0">
                <div className={clsx(BTN, 'w-[79px]')}>Classify</div>
                <div className={clsx(BTN, 'ml-[7px] h-6 w-7')}><Icon n="addG" className="size-3.5" /></div>
                <div className={clsx(BTN, 'ml-[6px] h-6 w-7')}><Icon n="minR" className="size-3.5" /></div>
                <div className={clsx(BTN, 'ml-[6px] w-20')}>Delete All</div>
                <div className={clsx(BTN, 'ml-auto w-[85px]')}>Advanced<Caret className="ml-[6px] h-1 w-[6px]" /></div>
              </div>
              <div className="mt-[6px] flex h-5 shrink-0 items-center pl-[5px] font-bold"><svg viewBox="0 0 8 12" className="mr-[9px] h-3 w-2"><path d="M0 0v12l7.500-6z" fill="#333" /></svg>Layer Rendering</div>
              <div className="mt-[4px] flex h-[25px] shrink-0 items-center">
                <div className={clsx(BTN, 'size-[23px]')}><Icon n="undoC" className="size-[12px]" /></div>
                <div className={clsx(BTN, 'ml-[6px] size-[23px]')}><Icon n="redoC" className="size-[12px]" /></div>
                <span className="ml-auto flex items-center gap-[5px]"><Check />Live update</span>
                <div className={clsx(BTN, 'ml-[13px] h-[25px] w-20')}><Icon n="apply" className="size-4" />Apply</div>
              </div>
            </div>
          </div>
          <div className="mt-1 flex shrink-0 border-t border-[#b8b8b8]">
            <Tab active w="w-[111px]">Layer Styling</Tab><Tab w="w-[150px]">Processing Toolbox</Tab><Tab w="w-[93px]">Value Tool</Tab>
          </div>
        </div>
      </div>

      {/* status bar */}
      <div className="flex h-[31px] shrink-0 items-center pl-1 text-[11px]">
        <div className="flex h-[25px] w-[270px] shrink-0 items-center rounded-[3px] border border-[#b0b0b0] bg-white px-2 text-[13.150px]"><Icon n="search" className="mr-[7px] size-3" />intersection<Icon n="clear" className="ml-auto size-3" /></div>
        <span className="ml-2 w-[743px] shrink-0">0 feature(s) selected on layer Intersection.</span>
        <span className="w-[64px] shrink-0">Coordinate</span>
        <div className="flex h-6 w-[110px] shrink-0 items-center justify-center rounded-[3px] border border-[#b0b0b0] bg-white">478859,984950</div>
        <Icon n="extents" className="mx-[5px] size-[14px]" />
        <span className="ml-[9px] w-[33px] shrink-0">Scale</span>
        <div className="flex h-6 w-[94px] shrink-0 items-center rounded-[3px] border border-[#b0b0b0] bg-white pl-[3px]">1:201788<span className="ml-auto flex h-full w-[18px] items-center justify-center border-l border-[#c4c4c4]"><Caret /></span></div>
        <Icon n="lock" className="mr-[9px] ml-[13px] size-[14px]" />
        <span className="w-[54px] shrink-0">Magnifier</span>
        <Spin w="w-[98px] shrink-0">100%</Spin>
        <span className="ml-[9px] w-[56px] shrink-0">Rotation</span>
        <Spin w="w-[94px] shrink-0">0.0 °</Spin>
        <span className="ml-[6px] flex items-center gap-[5px]"><Check />Render</span>
        <Icon n="globeG" className="ml-[16px] size-[15px]" /><span className="ml-[3px]">EPSG:32637</span>
        <Icon n="chat" className="mr-[8px] ml-auto size-4" />
      </div>
    </div>
  );
}
